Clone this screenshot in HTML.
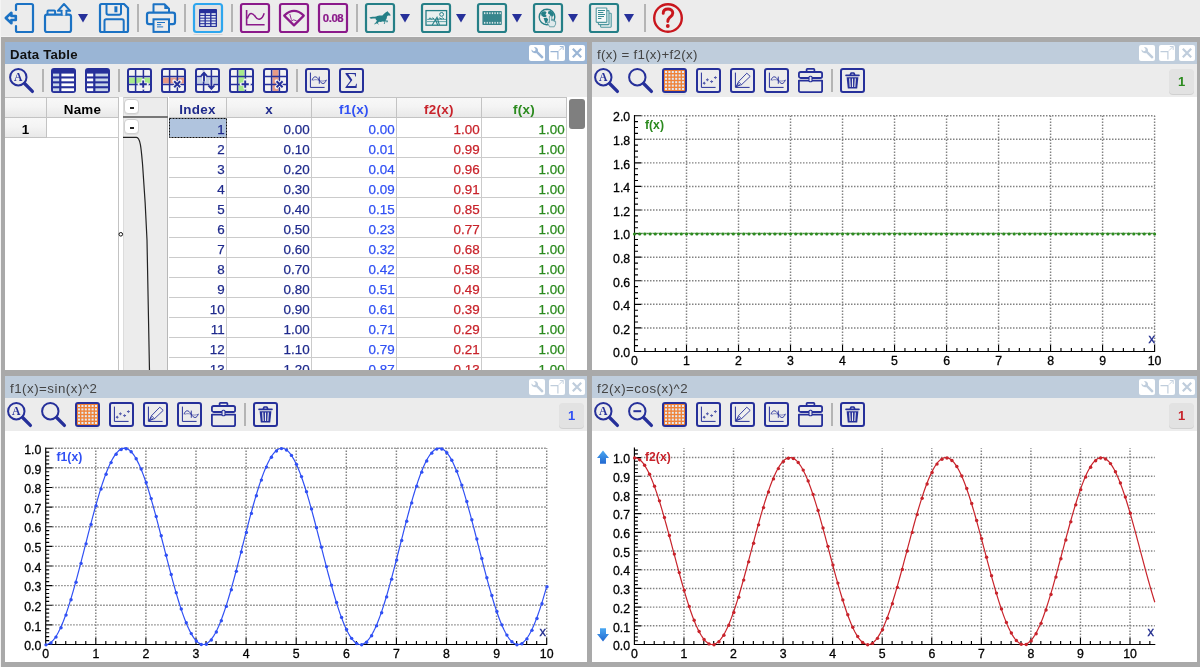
<!DOCTYPE html>
<html><head><meta charset="utf-8"><title>Data Table</title>
<style>
html,body{margin:0;padding:0}
body{width:1200px;height:667px;overflow:hidden;position:relative;background:#a9a9a9;font-family:"Liberation Sans",sans-serif;font-size:13px;color:#000}
div{position:absolute;box-sizing:border-box}
svg{position:absolute;left:0;top:0;overflow:visible}
svg text{font-family:"Liberation Sans",sans-serif}
.top{left:0;top:0;width:1200px;height:37px;background:#ececec}
.edge{left:0;top:0;width:1px;height:667px;background:#f4f4f4}
.edge2{left:0;top:36px;width:1200px;height:1px;background:#f3f3f3}
.title{height:22px;line-height:26px;overflow:hidden;padding-left:5px;font-size:13.3px;letter-spacing:0.3px;color:#444;white-space:nowrap}
.title.act{background:#9ab5d5;color:#111;font-weight:bold;font-size:13.2px;letter-spacing:0.2px}
.title.in{background:#bfcddc}
.tbar{height:33px;background:#ececec}
.cont{background:#fff;overflow:hidden}
.tb{width:16px;height:16px;top:3px;background:#fff;border-radius:2px}
.badge{width:25px;height:25px;top:5px;background:#e2e2e2;border-radius:4px;box-shadow:0 1px 0 #d0d0d0;font-weight:bold;font-size:13px;line-height:25px;text-align:center}
.hc{height:21px;top:0;background:linear-gradient(#f8f8f8,#f4f4f4 45%,#e8e8e8);border-right:1px solid #c3c3c3;border-bottom:1px solid #c3c3c3;border-top:1px solid #c3c3c3;font-weight:bold;text-align:center;line-height:24px;font-size:13.4px;letter-spacing:0.3px;overflow:hidden}
.c{height:20px;line-height:24px;overflow:hidden;text-align:right;padding-right:1.4px;border-right:1px solid #cbcbcb;border-bottom:1px solid #cbcbcb;font-size:13.4px;white-space:nowrap;-webkit-text-stroke-width:0.25px}
.ob{width:15px;height:15px;background:#fff;border:1px solid #cfcfcf;border-radius:4px;box-shadow:0 1px 0 #ddd}
.ob i{position:absolute;left:4.5px;top:7.4px;width:4.2px;height:1.5px;background:#222}
#root{left:0;top:0;width:1200px;height:667px;will-change:transform;overflow:hidden}
</style></head><body><div id="root">

<div class="top"></div><div class="edge2"></div><div class="edge"></div>
<svg width="1200" height="40" viewBox="0 0 1200 40">
<path d="M16,10 V5.5 Q16,4 17.5,4 H31.5 Q33,4 33,5.5 V30.5 Q33,32 31.5,32 H17.5 Q16,32 16,30.5 V26" fill="none" stroke="#1b72c4" stroke-width="2.2" stroke-linecap="round"/><path d="M5.8,18 L11.4,12.8 V16 H15.8 V20 H11.4 V23.2 Z" fill="#ececec" stroke="#1b72c4" stroke-width="2.6" stroke-linejoin="round"/><path d="M47.5,14 V11.5 Q47.5,10.6 48.4,10.6 H54.2 Q55.1,10.6 55.1,11.5 V14" fill="none" stroke="#1b72c4" stroke-width="2"/><rect x="45" y="14.6" width="26" height="17.4" rx="2" fill="none" stroke="#1b72c4" stroke-width="2.2"/><path d="M64,4 L70.2,10.8 H66.3 V14.4 H61.7 V10.8 H57.8 Z" fill="#ececec" stroke="#1b72c4" stroke-width="2" stroke-linejoin="round"/><rect x="62.7" y="11" width="2.6" height="4.6" fill="#ececec"/><path d="M78,14 h10 l-5,8.5z" fill="#26309a"/><path d="M101.5,4 H124 L128,8 V30.5 Q128,32 126.5,32 H101.5 Q100,32 100,30.5 V5.5 Q100,4 101.5,4 Z" fill="none" stroke="#1b72c4" stroke-width="2.2" stroke-linejoin="round"/><path d="M106.5,4.5 V13 Q106.5,14.8 108.3,14.8 H119.2 Q121,14.8 121,13 V4.5" fill="none" stroke="#1b72c4" stroke-width="2"/><rect x="114.4" y="6.3" width="3" height="6" fill="#1b72c4"/><path d="M104.5,31.5 V21 Q104.5,19.3 106.2,19.3 H122 Q123.7,19.3 123.7,21 V31.5" fill="none" stroke="#1b72c4" stroke-width="2"/><rect x="137" y="4" width="2" height="28" fill="#b4b4b4"/><path d="M153.5,12 V4.2 H164.5 L169,8.8 V12" fill="none" stroke="#1b72c4" stroke-width="2" stroke-linejoin="round"/><path d="M164.3,4.6 V9 H168.6 Z" fill="#1b72c4"/><rect x="147" y="12.6" width="28" height="11.6" rx="2.2" fill="none" stroke="#1b72c4" stroke-width="2.2"/><rect x="153.5" y="19.3" width="15.5" height="12.6" fill="#ececec" stroke="#1b72c4" stroke-width="2"/><path d="M157,22.5 h8 M157,24.7 h4.2 M157,26.9 h6.2" stroke="#1b72c4" stroke-width="1"/><rect x="184" y="4" width="2" height="28" fill="#b4b4b4"/><rect x="193.5" y="34" width="29" height="1" fill="#d6d6d6"/><rect x="194" y="4" width="28" height="28" rx="2.5" fill="#e2e2e2" stroke="#2ea6ee" stroke-width="2.2"/><rect x="199" y="9" width="18" height="18" rx="0.8" fill="#26309a"/><rect x="200.3" y="13.2" width="4.2" height="1.7" fill="#dfe6f2"/><rect x="205.9" y="13.2" width="4.2" height="1.7" fill="#dfe6f2"/><rect x="211.5" y="13.2" width="4.2" height="1.7" fill="#dfe6f2"/><rect x="200.3" y="15.95" width="4.2" height="1.7" fill="#dfe6f2"/><rect x="205.9" y="15.95" width="4.2" height="1.7" fill="#dfe6f2"/><rect x="211.5" y="15.95" width="4.2" height="1.7" fill="#dfe6f2"/><rect x="200.3" y="18.7" width="4.2" height="1.7" fill="#dfe6f2"/><rect x="205.9" y="18.7" width="4.2" height="1.7" fill="#dfe6f2"/><rect x="211.5" y="18.7" width="4.2" height="1.7" fill="#dfe6f2"/><rect x="200.3" y="21.45" width="4.2" height="1.7" fill="#dfe6f2"/><rect x="205.9" y="21.45" width="4.2" height="1.7" fill="#dfe6f2"/><rect x="211.5" y="21.45" width="4.2" height="1.7" fill="#dfe6f2"/><rect x="200.3" y="24.2" width="4.2" height="1.7" fill="#dfe6f2"/><rect x="205.9" y="24.2" width="4.2" height="1.7" fill="#dfe6f2"/><rect x="211.5" y="24.2" width="4.2" height="1.7" fill="#dfe6f2"/><rect x="231" y="4" width="2" height="28" fill="#b4b4b4"/><rect x="241" y="4" width="28" height="28" rx="2" fill="none" stroke="#8b1a8a" stroke-width="2.2"/><path d="M246.6,10 V24.8 H264.6" fill="none" stroke="#8b1a8a" stroke-width="1.6"/><path d="M247.4,18.6 C249.5,11 253,13 255.5,16.8 C258,20.8 262,20 264.2,13.2" fill="none" stroke="#8b1a8a" stroke-width="1.5"/><rect x="280" y="4" width="28" height="28" rx="2" fill="none" stroke="#8b1a8a" stroke-width="2.2"/><path d="M294,25.4 L284.2,15.6 Q294,6.2 303.8,15.6 Z" fill="none" stroke="#8b1a8a" stroke-width="2.2" stroke-linejoin="round"/><path d="M289.8,14 L291.4,19.8 M290.5,21.4 Q293.6,18.6 296.6,20.8" fill="none" stroke="#8b1a8a" stroke-width="0.9"/><rect x="319" y="4" width="28" height="28" rx="2" fill="none" stroke="#8b1a8a" stroke-width="2.2"/><text x="333" y="22" text-anchor="middle" font-size="11.4" font-weight="bold" letter-spacing="-0.45" fill="#8b1a8a" stroke="#8b1a8a" stroke-width="0.2">0.08</text><rect x="356" y="4" width="2" height="28" fill="#b4b4b4"/><rect x="366" y="4" width="28" height="28" rx="2" fill="none" stroke="#257f87" stroke-width="2.2"/><path d="M369.4,17.6 C371.5,16.2 374,16.8 376.2,16.4 C378,15.4 380.5,15.6 382.4,15.6 C383.6,14.4 385,12.4 386.8,11.8 L387.4,11 L388,12 C389.2,12.8 390.2,14.2 390.8,15.2 L389.8,15.8 C388.6,15.2 387.6,15.4 387,16.4 C386.8,18 386.6,19.4 385.4,20.2 C386.6,20.6 387.6,20 388,21 L387.2,22.6 L386.4,22.2 L386.8,21.4 C385.6,21.6 384.4,21.6 383.2,21.2 C382,21.8 380.4,22 379,21.8 C378.2,22.8 377,23.6 375.6,23.8 L374.8,24.6 L374.2,24 L375.2,23 C375.8,22.4 376.6,21.8 377,20.8 C376.2,20.4 375.6,19.6 375.6,18.6 C373.8,18.2 372,19 370.2,18.6 Z" fill="#257f87"/><path d="M377.4,21 C376.8,22.2 377.2,23.6 378.4,24.2 M383.6,21 C384.8,22 385,23 384,24" fill="none" stroke="#257f87" stroke-width="1"/><path d="M400,14 h10 l-5,8.5z" fill="#26309a"/><rect x="422" y="4" width="28" height="28" rx="2" fill="none" stroke="#257f87" stroke-width="2.2"/><rect x="426" y="10.6" width="20.6" height="14.6" fill="#e9f0f0" stroke="#257f87" stroke-width="1.3"/><circle cx="441.6" cy="14.4" r="1.9" fill="none" stroke="#257f87" stroke-width="1"/><path d="M427,19.4 h20 M427,21.6 h20" stroke="#257f87" stroke-width="0.9" opacity="0.75"/><path d="M428.6,19 q1.4,-2.2 2.8,0 q1.4,-2.2 2.8,0 M438.4,19 q1.4,-2.2 2.8,0 q1.4,-2.2 2.8,0" fill="none" stroke="#257f87" stroke-width="1"/><path d="M432.2,25 L437,17.2 L439.4,25 M435.6,19.6 L437.6,25" fill="none" stroke="#257f87" stroke-width="1.1"/><path d="M456,14 h10 l-5,8.5z" fill="#26309a"/><rect x="478" y="4" width="28" height="28" rx="2" fill="none" stroke="#257f87" stroke-width="2.2"/><rect x="482.4" y="11" width="19.4" height="14" rx="0.8" fill="#37858c"/><rect x="484" y="12.3" width="1.3" height="1.8" fill="#d8e6e8"/><rect x="484" y="21.9" width="1.3" height="1.8" fill="#d8e6e8"/><rect x="486.6" y="12.3" width="1.3" height="1.8" fill="#d8e6e8"/><rect x="486.6" y="21.9" width="1.3" height="1.8" fill="#d8e6e8"/><rect x="489.2" y="12.3" width="1.3" height="1.8" fill="#d8e6e8"/><rect x="489.2" y="21.9" width="1.3" height="1.8" fill="#d8e6e8"/><rect x="491.8" y="12.3" width="1.3" height="1.8" fill="#d8e6e8"/><rect x="491.8" y="21.9" width="1.3" height="1.8" fill="#d8e6e8"/><rect x="494.4" y="12.3" width="1.3" height="1.8" fill="#d8e6e8"/><rect x="494.4" y="21.9" width="1.3" height="1.8" fill="#d8e6e8"/><rect x="497" y="12.3" width="1.3" height="1.8" fill="#d8e6e8"/><rect x="497" y="21.9" width="1.3" height="1.8" fill="#d8e6e8"/><rect x="499.6" y="12.3" width="1.3" height="1.8" fill="#d8e6e8"/><rect x="499.6" y="21.9" width="1.3" height="1.8" fill="#d8e6e8"/><path d="M512,14 h10 l-5,8.5z" fill="#26309a"/><rect x="534" y="4" width="28" height="28" rx="2" fill="none" stroke="#257f87" stroke-width="2.2"/><circle cx="547" cy="17" r="7.8" fill="none" stroke="#257f87" stroke-width="1.4"/><path d="M541,13.6 L542.6,11.6 L545.2,11.2 L546.6,12.6 L545.4,14.6 L546.8,16 L545.6,17 L543.4,17 L541.4,15.6 Z M543.6,18 L546.8,17.8 L548.2,19.6 L547,22.6 L545.6,23.6 L544.6,21 Z M548.2,11.6 L550.6,10.8 L553,12.4 L553.8,15 L552.4,16.8 L550.4,16.4 L549.8,14.4 L548,13.6 Z M545.4,9.6 L548,9.4 L547,10.6 Z" fill="#257f87"/><path d="M549.4,18.2 v4.4 l-1.3,-0.6 l-0.7,1 l2.2,3.8 h4.6 l1.4,-2.6 v-3 l-1.2,-0.5 v0.9 v-1.4 l-1.3,-0.3 v1.2 v-1.6 l-1.3,-0.2 v1.4 v-4.5 q-1.2,-1 -2.4,0 z" fill="#dfeaec" stroke="#5f9aa3" stroke-width="0.9" stroke-linejoin="round"/><path d="M568,14 h10 l-5,8.5z" fill="#26309a"/><rect x="590" y="4" width="28" height="28" rx="2" fill="none" stroke="#257f87" stroke-width="2.2"/><rect x="600.6" y="13.2" width="10.6" height="14" rx="0.6" fill="#e4eeee" stroke="#4f98a0" stroke-width="1.1"/><rect x="598.4" y="10.6" width="10.6" height="14" rx="0.6" fill="#e4eeee" stroke="#4f98a0" stroke-width="1.1"/><rect x="596.2" y="8" width="10.6" height="14.4" rx="0.6" fill="#f4f8f8" stroke="#4f98a0" stroke-width="1.1"/><path d="M598,10.5 h7 M598,12.5 h5.4 M598,14.5 h7 M598,16.5 h6 M598,18.5 h3.4" stroke="#257f87" stroke-width="0.9"/><path d="M624,14 h10 l-5,8.5z" fill="#26309a"/><rect x="644" y="4" width="2" height="28" fill="#b4b4b4"/><circle cx="668" cy="18" r="13.8" fill="none" stroke="#c9161d" stroke-width="2.4"/><path d="M663.2,13.4 C663.2,10.4 665.4,9 668,9 C670.8,9 672.8,10.6 672.8,13 C672.8,15.2 671.4,16 669.8,17.4 C668.4,18.6 667.8,19.4 667.8,21.6" fill="none" stroke="#c9161d" stroke-width="2.9" stroke-linecap="round"/><circle cx="667.8" cy="26" r="1.9" fill="#c9161d"/>
</svg>
<div class="title act" style="left:5px;top:42px;width:582px">Data Table</div>
<svg width="1200" height="667" viewBox="0 0 1200 667"><rect x="529" y="45" width="16" height="16" rx="2" fill="#fff"/><rect x="549" y="45" width="16" height="16" rx="2" fill="#fff"/><rect x="569" y="45" width="16" height="16" rx="2" fill="#fff"/><g transform="translate(529,45)"><path d="M2.6,4.6 L4.3,6.3 L6.2,5.9 L6.6,4 L4.9,2.3 C7.4,1.5 9.6,3.8 8.9,6.2 L14.2,11.4 C15,12.4 13.4,14 12.4,13.2 L7.2,8 C4.8,8.8 2,7 2.6,4.6 Z" fill="#9ab5d5"/></g><g transform="translate(549,45)"><path d="M1.5,6.6 H8.9 V14.6" fill="none" stroke="#9ab5d5" stroke-width="1.2"/><path d="M10,5.6 L14,1.6 M10.8,1.5 H14.2 V4.9" fill="none" stroke="#9ab5d5" stroke-width="0.9"/></g><g transform="translate(569,45)"><path d="M3.8,3.8 L12.2,12.2 M12.2,3.8 L3.8,12.2" fill="none" stroke="#9ab5d5" stroke-width="2.2"/></g></svg>
<div class="tbar" style="left:5px;top:64px;width:582px"></div>
<div class="cont" style="left:5px;top:97px;width:582px;height:273px"></div>
<div class="title in" style="left:592px;top:42px;width:605px">f(x) = f1(x)+f2(x)</div>
<svg width="1200" height="667" viewBox="0 0 1200 667"><rect x="1139" y="45" width="16" height="16" rx="2" fill="#fff"/><rect x="1159" y="45" width="16" height="16" rx="2" fill="#fff"/><rect x="1179" y="45" width="16" height="16" rx="2" fill="#fff"/><g transform="translate(1139,45)"><path d="M2.6,4.6 L4.3,6.3 L6.2,5.9 L6.6,4 L4.9,2.3 C7.4,1.5 9.6,3.8 8.9,6.2 L14.2,11.4 C15,12.4 13.4,14 12.4,13.2 L7.2,8 C4.8,8.8 2,7 2.6,4.6 Z" fill="#bfcddc"/></g><g transform="translate(1159,45)"><path d="M1.5,6.6 H8.9 V14.6" fill="none" stroke="#bfcddc" stroke-width="1.2"/><path d="M10,5.6 L14,1.6 M10.8,1.5 H14.2 V4.9" fill="none" stroke="#bfcddc" stroke-width="0.9"/></g><g transform="translate(1179,45)"><path d="M3.8,3.8 L12.2,12.2 M12.2,3.8 L3.8,12.2" fill="none" stroke="#bfcddc" stroke-width="2.2"/></g></svg>
<div class="tbar" style="left:592px;top:64px;width:605px"></div>
<div class="cont" style="left:592px;top:97px;width:605px;height:273px"></div>
<div class="title in" style="left:5px;top:376px;width:582px;letter-spacing:0.5px">f1(x)=sin(x)^2</div>
<svg width="1200" height="667" viewBox="0 0 1200 667"><rect x="529" y="379" width="16" height="16" rx="2" fill="#fff"/><rect x="549" y="379" width="16" height="16" rx="2" fill="#fff"/><rect x="569" y="379" width="16" height="16" rx="2" fill="#fff"/><g transform="translate(529,379)"><path d="M2.6,4.6 L4.3,6.3 L6.2,5.9 L6.6,4 L4.9,2.3 C7.4,1.5 9.6,3.8 8.9,6.2 L14.2,11.4 C15,12.4 13.4,14 12.4,13.2 L7.2,8 C4.8,8.8 2,7 2.6,4.6 Z" fill="#bfcddc"/></g><g transform="translate(549,379)"><path d="M1.5,6.6 H8.9 V14.6" fill="none" stroke="#bfcddc" stroke-width="1.2"/><path d="M10,5.6 L14,1.6 M10.8,1.5 H14.2 V4.9" fill="none" stroke="#bfcddc" stroke-width="0.9"/></g><g transform="translate(569,379)"><path d="M3.8,3.8 L12.2,12.2 M12.2,3.8 L3.8,12.2" fill="none" stroke="#bfcddc" stroke-width="2.2"/></g></svg>
<div class="tbar" style="left:5px;top:398px;width:582px"></div>
<div class="cont" style="left:5px;top:431px;width:582px;height:231px"></div>
<div class="title in" style="left:592px;top:376px;width:605px;letter-spacing:0.5px">f2(x)=cos(x)^2</div>
<svg width="1200" height="667" viewBox="0 0 1200 667"><rect x="1139" y="379" width="16" height="16" rx="2" fill="#fff"/><rect x="1159" y="379" width="16" height="16" rx="2" fill="#fff"/><rect x="1179" y="379" width="16" height="16" rx="2" fill="#fff"/><g transform="translate(1139,379)"><path d="M2.6,4.6 L4.3,6.3 L6.2,5.9 L6.6,4 L4.9,2.3 C7.4,1.5 9.6,3.8 8.9,6.2 L14.2,11.4 C15,12.4 13.4,14 12.4,13.2 L7.2,8 C4.8,8.8 2,7 2.6,4.6 Z" fill="#bfcddc"/></g><g transform="translate(1159,379)"><path d="M1.5,6.6 H8.9 V14.6" fill="none" stroke="#bfcddc" stroke-width="1.2"/><path d="M10,5.6 L14,1.6 M10.8,1.5 H14.2 V4.9" fill="none" stroke="#bfcddc" stroke-width="0.9"/></g><g transform="translate(1179,379)"><path d="M3.8,3.8 L12.2,12.2 M12.2,3.8 L3.8,12.2" fill="none" stroke="#bfcddc" stroke-width="2.2"/></g></svg>
<div class="tbar" style="left:592px;top:398px;width:605px"></div>
<div class="cont" style="left:592px;top:431px;width:605px;height:231px"></div>
<div class="badge" style="left:1169px;top:69px;color:#2b8a1e">1</div>
<div class="badge" style="left:559px;top:403px;color:#3050f4">1</div>
<div class="badge" style="left:1169px;top:403px;color:#c8232b">1</div>
<svg width="1200" height="667" viewBox="0 0 1200 667">
<g transform="translate(9,68)"><circle cx="9.3" cy="9.2" r="8.2" fill="none" stroke="#26309a" stroke-width="2"/><path d="M15.6,15.5 L23.4,23.4" stroke="#26309a" stroke-width="3.3" stroke-linecap="round"/><text x="9.3" y="13.0" text-anchor="middle" font-size="11.7" font-weight="bold" style="font-family:'Liberation Serif',serif" fill="#26309a">A</text></g><rect x="42" y="69" width="2" height="23" fill="#b4b4b4"/><g transform="translate(51,68)"><rect x="0" y="0" width="25" height="25" rx="3" fill="#26309a"/><rect x="2" y="5.6" width="6.2" height="2.8" fill="#c9d6e8"/><rect x="10.4" y="5.6" width="12.6" height="2.8" fill="#ffffff"/><rect x="2" y="10.5" width="6.2" height="2.8" fill="#c9d6e8"/><rect x="10.4" y="10.5" width="12.6" height="2.8" fill="#ffffff"/><rect x="2" y="15.4" width="6.2" height="2.8" fill="#c9d6e8"/><rect x="10.4" y="15.4" width="12.6" height="2.8" fill="#ffffff"/><rect x="2" y="20.3" width="6.2" height="2.8" fill="#c9d6e8"/><rect x="10.4" y="20.3" width="12.6" height="2.8" fill="#ffffff"/></g><g transform="translate(85,68)"><rect x="0" y="0" width="25" height="25" rx="3" fill="#26309a"/><rect x="2" y="5.6" width="6.2" height="2.8" fill="#ffffff"/><rect x="10.4" y="5.6" width="12.6" height="2.8" fill="#c9d6e8"/><rect x="2" y="10.5" width="6.2" height="2.8" fill="#ffffff"/><rect x="10.4" y="10.5" width="12.6" height="2.8" fill="#c9d6e8"/><rect x="2" y="15.4" width="6.2" height="2.8" fill="#ffffff"/><rect x="10.4" y="15.4" width="12.6" height="2.8" fill="#c9d6e8"/><rect x="2" y="20.3" width="6.2" height="2.8" fill="#ffffff"/><rect x="10.4" y="20.3" width="12.6" height="2.8" fill="#c9d6e8"/></g><rect x="118" y="69" width="2" height="23" fill="#b4b4b4"/><g transform="translate(127,68)"><rect x="1" y="1" width="23" height="23" rx="2" fill="#f3f3f3" stroke="#26309a" stroke-width="2"/><rect x="2" y="9.6" width="21" height="5.8" fill="#a8ea8a"/><path d="M8.6,1 V24 M16.4,1 V24 M1,8.6 H24 M1,16.4 H24" stroke="#26309a" stroke-width="1.5"/><path d="M12.4,16.2 h7.6 M16.2,12.4 v7.6" stroke="#f3f3f3" stroke-width="3.6" stroke-linecap="round"/><path d="M12.6,16.2 h7.2 M16.2,12.6 v7.2" stroke="#26309a" stroke-width="1.9"/></g><g transform="translate(161,68)"><rect x="1" y="1" width="23" height="23" rx="2" fill="#f3f3f3" stroke="#26309a" stroke-width="2"/><rect x="2" y="9.6" width="21" height="5.8" fill="#e79a86"/><path d="M8.6,1 V24 M16.4,1 V24 M1,8.6 H24 M1,16.4 H24" stroke="#26309a" stroke-width="1.5"/><path d="M13.2,13.2 l6,6 M19.2,13.2 l-6,6" stroke="#f3f3f3" stroke-width="3.8" stroke-linecap="round"/><path d="M13.2,13.2 l6,6 M19.2,13.2 l-6,6" stroke="#26309a" stroke-width="2"/></g><g transform="translate(195,68)"><rect x="1" y="1" width="23" height="23" rx="2" fill="#f3f3f3" stroke="#26309a" stroke-width="2"/><rect x="2" y="9.6" width="21" height="5.8" fill="#c3cfe0"/><path d="M8.6,1 V24 M16.4,1 V24 M1,8.6 H24 M1,16.4 H24" stroke="#26309a" stroke-width="1.5"/><path d="M9,13.4 V5 M6,8 L9,4.6 L12,8" fill="none" stroke="#f3f3f3" stroke-width="3.8"/><path d="M16.4,12 V20.6 M13.4,17.6 L16.4,21 L19.4,17.6" fill="none" stroke="#f3f3f3" stroke-width="3.8"/><path d="M9,13.4 V5.4 M6,8.2 L9,4.8 L12,8.2" fill="none" stroke="#26309a" stroke-width="1.9"/><path d="M16.4,12 V20.4 M13.4,17.4 L16.4,20.8 L19.4,17.4" fill="none" stroke="#26309a" stroke-width="1.9"/></g><g transform="translate(229,68)"><rect x="1" y="1" width="23" height="23" rx="2" fill="#f3f3f3" stroke="#26309a" stroke-width="2"/><rect x="9.6" y="2" width="5.8" height="21" fill="#a8ea8a"/><path d="M8.6,1 V24 M16.4,1 V24 M1,8.6 H24 M1,16.4 H24" stroke="#26309a" stroke-width="1.5"/><path d="M12.4,16.2 h7.6 M16.2,12.4 v7.6" stroke="#f3f3f3" stroke-width="3.6" stroke-linecap="round"/><path d="M12.6,16.2 h7.2 M16.2,12.6 v7.2" stroke="#26309a" stroke-width="1.9"/></g><g transform="translate(263,68)"><rect x="1" y="1" width="23" height="23" rx="2" fill="#f3f3f3" stroke="#26309a" stroke-width="2"/><rect x="9.6" y="2" width="5.8" height="21" fill="#e79a86"/><path d="M8.6,1 V24 M16.4,1 V24 M1,8.6 H24 M1,16.4 H24" stroke="#26309a" stroke-width="1.5"/><path d="M13.6,13.2 l6,6 M19.6,13.2 l-6,6" stroke="#f3f3f3" stroke-width="3.8" stroke-linecap="round"/><path d="M13.6,13.2 l6,6 M19.6,13.2 l-6,6" stroke="#26309a" stroke-width="2"/></g><rect x="296" y="69" width="2" height="23" fill="#b4b4b4"/><g transform="translate(305,68)"><rect x="1" y="1" width="23" height="23" rx="2" fill="none" stroke="#26309a" stroke-width="2"/><path d="M5.4,4.6 V19.4 H19.6" fill="none" stroke="#26309a" stroke-width="1"/><path d="M7,12.2 C8.6,7.6 11.6,7.8 14.2,12.2 S19.6,16.8 21.4,11.8" fill="none" stroke="#26309a" stroke-width="0.95"/><path d="M7.6,12.4 C10,11.2 12.4,11.6 14.2,12.4 S18.6,13.4 21,12.4" fill="none" stroke="#26309a" stroke-width="0.55"/><path d="M14.3,8.6 V15.8" stroke="#26309a" stroke-width="0.9"/></g><g transform="translate(339,68)"><rect x="1" y="1" width="23" height="23" rx="2" fill="none" stroke="#26309a" stroke-width="2"/><text x="12.3" y="20.1" text-anchor="middle" font-size="23.2" style="font-family:'Liberation Serif',serif" fill="#26309a">Σ</text></g>
<g transform="translate(594,68)"><circle cx="9.3" cy="9.2" r="8.2" fill="none" stroke="#26309a" stroke-width="2"/><path d="M15.6,15.5 L23.4,23.4" stroke="#26309a" stroke-width="3.3" stroke-linecap="round"/><text x="9.3" y="13.0" text-anchor="middle" font-size="11.7" font-weight="bold" style="font-family:'Liberation Serif',serif" fill="#26309a">A</text></g><g transform="translate(628,68)"><circle cx="9.3" cy="9.2" r="8.2" fill="none" stroke="#26309a" stroke-width="2"/><path d="M15.6,15.5 L23.4,23.4" stroke="#26309a" stroke-width="3.3" stroke-linecap="round"/></g><g transform="translate(662,68)"><rect x="1.5" y="25.6" width="22" height="1" fill="#d9d9d9"/><rect x="1" y="1" width="23" height="23" rx="2" fill="#ef8238" stroke="#26309a" stroke-width="2"/><rect x="3" y="3" width="2.0" height="2.0" fill="#e3ebf6"/><rect x="6.4" y="3" width="2.0" height="2.0" fill="#e3ebf6"/><rect x="9.8" y="3" width="2.0" height="2.0" fill="#e3ebf6"/><rect x="13.2" y="3" width="2.0" height="2.0" fill="#e3ebf6"/><rect x="16.6" y="3" width="2.0" height="2.0" fill="#e3ebf6"/><rect x="20" y="3" width="2.0" height="2.0" fill="#e3ebf6"/><rect x="3" y="6.4" width="2.0" height="2.0" fill="#e3ebf6"/><rect x="6.4" y="6.4" width="2.0" height="2.0" fill="#e3ebf6"/><rect x="9.8" y="6.4" width="2.0" height="2.0" fill="#e3ebf6"/><rect x="13.2" y="6.4" width="2.0" height="2.0" fill="#e3ebf6"/><rect x="16.6" y="6.4" width="2.0" height="2.0" fill="#e3ebf6"/><rect x="20" y="6.4" width="2.0" height="2.0" fill="#e3ebf6"/><rect x="3" y="9.8" width="2.0" height="2.0" fill="#e3ebf6"/><rect x="6.4" y="9.8" width="2.0" height="2.0" fill="#e3ebf6"/><rect x="9.8" y="9.8" width="2.0" height="2.0" fill="#e3ebf6"/><rect x="13.2" y="9.8" width="2.0" height="2.0" fill="#e3ebf6"/><rect x="16.6" y="9.8" width="2.0" height="2.0" fill="#e3ebf6"/><rect x="20" y="9.8" width="2.0" height="2.0" fill="#e3ebf6"/><rect x="3" y="13.2" width="2.0" height="2.0" fill="#e3ebf6"/><rect x="6.4" y="13.2" width="2.0" height="2.0" fill="#e3ebf6"/><rect x="9.8" y="13.2" width="2.0" height="2.0" fill="#e3ebf6"/><rect x="13.2" y="13.2" width="2.0" height="2.0" fill="#e3ebf6"/><rect x="16.6" y="13.2" width="2.0" height="2.0" fill="#e3ebf6"/><rect x="20" y="13.2" width="2.0" height="2.0" fill="#e3ebf6"/><rect x="3" y="16.6" width="2.0" height="2.0" fill="#e3ebf6"/><rect x="6.4" y="16.6" width="2.0" height="2.0" fill="#e3ebf6"/><rect x="9.8" y="16.6" width="2.0" height="2.0" fill="#e3ebf6"/><rect x="13.2" y="16.6" width="2.0" height="2.0" fill="#e3ebf6"/><rect x="16.6" y="16.6" width="2.0" height="2.0" fill="#e3ebf6"/><rect x="20" y="16.6" width="2.0" height="2.0" fill="#e3ebf6"/><rect x="3" y="20" width="2.0" height="2.0" fill="#e3ebf6"/><rect x="6.4" y="20" width="2.0" height="2.0" fill="#e3ebf6"/><rect x="9.8" y="20" width="2.0" height="2.0" fill="#e3ebf6"/><rect x="13.2" y="20" width="2.0" height="2.0" fill="#e3ebf6"/><rect x="16.6" y="20" width="2.0" height="2.0" fill="#e3ebf6"/><rect x="20" y="20" width="2.0" height="2.0" fill="#e3ebf6"/></g><g transform="translate(696,68)"><rect x="1" y="1" width="23" height="23" rx="2" fill="none" stroke="#26309a" stroke-width="2"/><path d="M5.4,4.6 V19.4 H19.6" fill="none" stroke="#26309a" stroke-width="1"/><path d="M8.2,13.5 l0.595,1.105 l1.105,0.595 l-1.105,0.595 l-0.595,1.105 z" fill="#26309a"/><path d="M8.2,13.5 l-0.595,1.105 l-1.105,0.595 l1.105,0.595 l0.595,1.105 z" fill="#26309a"/><path d="M11.4,10.1 l0.595,1.105 l1.105,0.595 l-1.105,0.595 l-0.595,1.105 z" fill="#26309a"/><path d="M11.4,10.1 l-0.595,1.105 l-1.105,0.595 l1.105,0.595 l0.595,1.105 z" fill="#26309a"/><path d="M15.6,11.9 l0.595,1.105 l1.105,0.595 l-1.105,0.595 l-0.595,1.105 z" fill="#26309a"/><path d="M15.6,11.9 l-0.595,1.105 l-1.105,0.595 l1.105,0.595 l0.595,1.105 z" fill="#26309a"/><path d="M19.4,7.9 l0.595,1.105 l1.105,0.595 l-1.105,0.595 l-0.595,1.105 z" fill="#26309a"/><path d="M19.4,7.9 l-0.595,1.105 l-1.105,0.595 l1.105,0.595 l0.595,1.105 z" fill="#26309a"/></g><g transform="translate(730,68)"><rect x="1" y="1" width="23" height="23" rx="2" fill="none" stroke="#26309a" stroke-width="2"/><path d="M5.4,4.6 V19.4 H19.6" fill="none" stroke="#26309a" stroke-width="1"/><path d="M6.2,18.6 L8.6,13.6 L16.8,5.2 L20.2,8.4 L11.6,16.6 Z" fill="#f0f0f0" stroke="#26309a" stroke-width="0.9" stroke-linejoin="round"/><path d="M8.6,13.6 L9.6,14.8 L10.4,15.4 L11.6,16.6 M6.2,18.6 L8,15.4 L9.6,17 Z" fill="none" stroke="#26309a" stroke-width="0.8"/></g><g transform="translate(764,68)"><rect x="1" y="1" width="23" height="23" rx="2" fill="none" stroke="#26309a" stroke-width="2"/><path d="M5.4,4.6 V19.4 H19.6" fill="none" stroke="#26309a" stroke-width="1"/><path d="M7,12.2 C8.6,7.6 11.6,7.8 14.2,12.2 S19.6,16.8 21.4,11.8" fill="none" stroke="#26309a" stroke-width="0.95"/><path d="M7.6,12.4 C10,11.2 12.4,11.6 14.2,12.4 S18.6,13.4 21,12.4" fill="none" stroke="#26309a" stroke-width="0.55"/><path d="M14.3,8.6 V15.8" stroke="#26309a" stroke-width="0.9"/></g><g transform="translate(798,68)"><path d="M8.6,4 V1.6 Q8.6,0.8 9.4,0.8 H15.6 Q16.4,0.8 16.4,1.6 V4" fill="none" stroke="#26309a" stroke-width="1.7"/><rect x="0.9" y="4" width="23.2" height="6" rx="1.8" fill="none" stroke="#26309a" stroke-width="1.8"/><path d="M0.9,12.6 H24.1 V22.4 Q24.1,24.1 22.4,24.1 H2.6 Q0.9,24.1 0.9,22.4 Z" fill="none" stroke="#26309a" stroke-width="1.8" stroke-linejoin="round"/><rect x="11" y="8.2" width="3" height="5.6" rx="1" fill="#e6e6ee" stroke="#26309a" stroke-width="1.1"/></g><rect x="831" y="69" width="2" height="23" fill="#b4b4b4"/><g transform="translate(840,68)"><rect x="1" y="1" width="23" height="23" rx="2" fill="none" stroke="#26309a" stroke-width="2"/><path d="M6,7.4 H19 M10.4,6.4 L11.2,5 H13.8 L14.6,6.4" fill="none" stroke="#26309a" stroke-width="1.6" stroke-linecap="round" stroke-linejoin="round"/><path d="M6.6,9.2 H18.4 L17.2,20.4 H7.8 Z" fill="#26309a"/><path d="M9.7,10.4 L10.2,19 M12.5,10.4 V19 M15.3,10.4 L14.8,19" stroke="#ececec" stroke-width="1.1"/></g>
<g transform="translate(7,402)"><circle cx="9.3" cy="9.2" r="8.2" fill="none" stroke="#26309a" stroke-width="2"/><path d="M15.6,15.5 L23.4,23.4" stroke="#26309a" stroke-width="3.3" stroke-linecap="round"/><text x="9.3" y="13.0" text-anchor="middle" font-size="11.7" font-weight="bold" style="font-family:'Liberation Serif',serif" fill="#26309a">A</text></g><g transform="translate(41,402)"><circle cx="9.3" cy="9.2" r="8.2" fill="none" stroke="#26309a" stroke-width="2"/><path d="M15.6,15.5 L23.4,23.4" stroke="#26309a" stroke-width="3.3" stroke-linecap="round"/></g><g transform="translate(75,402)"><rect x="1.5" y="25.6" width="22" height="1" fill="#d9d9d9"/><rect x="1" y="1" width="23" height="23" rx="2" fill="#ef8238" stroke="#26309a" stroke-width="2"/><rect x="3" y="3" width="2.0" height="2.0" fill="#e3ebf6"/><rect x="6.4" y="3" width="2.0" height="2.0" fill="#e3ebf6"/><rect x="9.8" y="3" width="2.0" height="2.0" fill="#e3ebf6"/><rect x="13.2" y="3" width="2.0" height="2.0" fill="#e3ebf6"/><rect x="16.6" y="3" width="2.0" height="2.0" fill="#e3ebf6"/><rect x="20" y="3" width="2.0" height="2.0" fill="#e3ebf6"/><rect x="3" y="6.4" width="2.0" height="2.0" fill="#e3ebf6"/><rect x="6.4" y="6.4" width="2.0" height="2.0" fill="#e3ebf6"/><rect x="9.8" y="6.4" width="2.0" height="2.0" fill="#e3ebf6"/><rect x="13.2" y="6.4" width="2.0" height="2.0" fill="#e3ebf6"/><rect x="16.6" y="6.4" width="2.0" height="2.0" fill="#e3ebf6"/><rect x="20" y="6.4" width="2.0" height="2.0" fill="#e3ebf6"/><rect x="3" y="9.8" width="2.0" height="2.0" fill="#e3ebf6"/><rect x="6.4" y="9.8" width="2.0" height="2.0" fill="#e3ebf6"/><rect x="9.8" y="9.8" width="2.0" height="2.0" fill="#e3ebf6"/><rect x="13.2" y="9.8" width="2.0" height="2.0" fill="#e3ebf6"/><rect x="16.6" y="9.8" width="2.0" height="2.0" fill="#e3ebf6"/><rect x="20" y="9.8" width="2.0" height="2.0" fill="#e3ebf6"/><rect x="3" y="13.2" width="2.0" height="2.0" fill="#e3ebf6"/><rect x="6.4" y="13.2" width="2.0" height="2.0" fill="#e3ebf6"/><rect x="9.8" y="13.2" width="2.0" height="2.0" fill="#e3ebf6"/><rect x="13.2" y="13.2" width="2.0" height="2.0" fill="#e3ebf6"/><rect x="16.6" y="13.2" width="2.0" height="2.0" fill="#e3ebf6"/><rect x="20" y="13.2" width="2.0" height="2.0" fill="#e3ebf6"/><rect x="3" y="16.6" width="2.0" height="2.0" fill="#e3ebf6"/><rect x="6.4" y="16.6" width="2.0" height="2.0" fill="#e3ebf6"/><rect x="9.8" y="16.6" width="2.0" height="2.0" fill="#e3ebf6"/><rect x="13.2" y="16.6" width="2.0" height="2.0" fill="#e3ebf6"/><rect x="16.6" y="16.6" width="2.0" height="2.0" fill="#e3ebf6"/><rect x="20" y="16.6" width="2.0" height="2.0" fill="#e3ebf6"/><rect x="3" y="20" width="2.0" height="2.0" fill="#e3ebf6"/><rect x="6.4" y="20" width="2.0" height="2.0" fill="#e3ebf6"/><rect x="9.8" y="20" width="2.0" height="2.0" fill="#e3ebf6"/><rect x="13.2" y="20" width="2.0" height="2.0" fill="#e3ebf6"/><rect x="16.6" y="20" width="2.0" height="2.0" fill="#e3ebf6"/><rect x="20" y="20" width="2.0" height="2.0" fill="#e3ebf6"/></g><g transform="translate(109,402)"><rect x="1" y="1" width="23" height="23" rx="2" fill="none" stroke="#26309a" stroke-width="2"/><path d="M5.4,4.6 V19.4 H19.6" fill="none" stroke="#26309a" stroke-width="1"/><path d="M8.2,13.5 l0.595,1.105 l1.105,0.595 l-1.105,0.595 l-0.595,1.105 z" fill="#26309a"/><path d="M8.2,13.5 l-0.595,1.105 l-1.105,0.595 l1.105,0.595 l0.595,1.105 z" fill="#26309a"/><path d="M11.4,10.1 l0.595,1.105 l1.105,0.595 l-1.105,0.595 l-0.595,1.105 z" fill="#26309a"/><path d="M11.4,10.1 l-0.595,1.105 l-1.105,0.595 l1.105,0.595 l0.595,1.105 z" fill="#26309a"/><path d="M15.6,11.9 l0.595,1.105 l1.105,0.595 l-1.105,0.595 l-0.595,1.105 z" fill="#26309a"/><path d="M15.6,11.9 l-0.595,1.105 l-1.105,0.595 l1.105,0.595 l0.595,1.105 z" fill="#26309a"/><path d="M19.4,7.9 l0.595,1.105 l1.105,0.595 l-1.105,0.595 l-0.595,1.105 z" fill="#26309a"/><path d="M19.4,7.9 l-0.595,1.105 l-1.105,0.595 l1.105,0.595 l0.595,1.105 z" fill="#26309a"/></g><g transform="translate(143,402)"><rect x="1" y="1" width="23" height="23" rx="2" fill="none" stroke="#26309a" stroke-width="2"/><path d="M5.4,4.6 V19.4 H19.6" fill="none" stroke="#26309a" stroke-width="1"/><path d="M6.2,18.6 L8.6,13.6 L16.8,5.2 L20.2,8.4 L11.6,16.6 Z" fill="#f0f0f0" stroke="#26309a" stroke-width="0.9" stroke-linejoin="round"/><path d="M8.6,13.6 L9.6,14.8 L10.4,15.4 L11.6,16.6 M6.2,18.6 L8,15.4 L9.6,17 Z" fill="none" stroke="#26309a" stroke-width="0.8"/></g><g transform="translate(177,402)"><rect x="1" y="1" width="23" height="23" rx="2" fill="none" stroke="#26309a" stroke-width="2"/><path d="M5.4,4.6 V19.4 H19.6" fill="none" stroke="#26309a" stroke-width="1"/><path d="M7,12.2 C8.6,7.6 11.6,7.8 14.2,12.2 S19.6,16.8 21.4,11.8" fill="none" stroke="#26309a" stroke-width="0.95"/><path d="M7.6,12.4 C10,11.2 12.4,11.6 14.2,12.4 S18.6,13.4 21,12.4" fill="none" stroke="#26309a" stroke-width="0.55"/><path d="M14.3,8.6 V15.8" stroke="#26309a" stroke-width="0.9"/></g><g transform="translate(211,402)"><path d="M8.6,4 V1.6 Q8.6,0.8 9.4,0.8 H15.6 Q16.4,0.8 16.4,1.6 V4" fill="none" stroke="#26309a" stroke-width="1.7"/><rect x="0.9" y="4" width="23.2" height="6" rx="1.8" fill="none" stroke="#26309a" stroke-width="1.8"/><path d="M0.9,12.6 H24.1 V22.4 Q24.1,24.1 22.4,24.1 H2.6 Q0.9,24.1 0.9,22.4 Z" fill="none" stroke="#26309a" stroke-width="1.8" stroke-linejoin="round"/><rect x="11" y="8.2" width="3" height="5.6" rx="1" fill="#e6e6ee" stroke="#26309a" stroke-width="1.1"/></g><rect x="244" y="403" width="2" height="23" fill="#b4b4b4"/><g transform="translate(253,402)"><rect x="1" y="1" width="23" height="23" rx="2" fill="none" stroke="#26309a" stroke-width="2"/><path d="M6,7.4 H19 M10.4,6.4 L11.2,5 H13.8 L14.6,6.4" fill="none" stroke="#26309a" stroke-width="1.6" stroke-linecap="round" stroke-linejoin="round"/><path d="M6.6,9.2 H18.4 L17.2,20.4 H7.8 Z" fill="#26309a"/><path d="M9.7,10.4 L10.2,19 M12.5,10.4 V19 M15.3,10.4 L14.8,19" stroke="#ececec" stroke-width="1.1"/></g>
<g transform="translate(594,402)"><circle cx="9.3" cy="9.2" r="8.2" fill="none" stroke="#26309a" stroke-width="2"/><path d="M15.6,15.5 L23.4,23.4" stroke="#26309a" stroke-width="3.3" stroke-linecap="round"/><text x="9.3" y="13.0" text-anchor="middle" font-size="11.7" font-weight="bold" style="font-family:'Liberation Serif',serif" fill="#26309a">A</text></g><g transform="translate(628,402)"><circle cx="9.3" cy="9.2" r="8.2" fill="none" stroke="#26309a" stroke-width="2"/><path d="M15.6,15.5 L23.4,23.4" stroke="#26309a" stroke-width="3.3" stroke-linecap="round"/><path d="M5.4,9.2 H13.2" stroke="#26309a" stroke-width="2"/></g><g transform="translate(662,402)"><rect x="1.5" y="25.6" width="22" height="1" fill="#d9d9d9"/><rect x="1" y="1" width="23" height="23" rx="2" fill="#ef8238" stroke="#26309a" stroke-width="2"/><rect x="3" y="3" width="2.0" height="2.0" fill="#e3ebf6"/><rect x="6.4" y="3" width="2.0" height="2.0" fill="#e3ebf6"/><rect x="9.8" y="3" width="2.0" height="2.0" fill="#e3ebf6"/><rect x="13.2" y="3" width="2.0" height="2.0" fill="#e3ebf6"/><rect x="16.6" y="3" width="2.0" height="2.0" fill="#e3ebf6"/><rect x="20" y="3" width="2.0" height="2.0" fill="#e3ebf6"/><rect x="3" y="6.4" width="2.0" height="2.0" fill="#e3ebf6"/><rect x="6.4" y="6.4" width="2.0" height="2.0" fill="#e3ebf6"/><rect x="9.8" y="6.4" width="2.0" height="2.0" fill="#e3ebf6"/><rect x="13.2" y="6.4" width="2.0" height="2.0" fill="#e3ebf6"/><rect x="16.6" y="6.4" width="2.0" height="2.0" fill="#e3ebf6"/><rect x="20" y="6.4" width="2.0" height="2.0" fill="#e3ebf6"/><rect x="3" y="9.8" width="2.0" height="2.0" fill="#e3ebf6"/><rect x="6.4" y="9.8" width="2.0" height="2.0" fill="#e3ebf6"/><rect x="9.8" y="9.8" width="2.0" height="2.0" fill="#e3ebf6"/><rect x="13.2" y="9.8" width="2.0" height="2.0" fill="#e3ebf6"/><rect x="16.6" y="9.8" width="2.0" height="2.0" fill="#e3ebf6"/><rect x="20" y="9.8" width="2.0" height="2.0" fill="#e3ebf6"/><rect x="3" y="13.2" width="2.0" height="2.0" fill="#e3ebf6"/><rect x="6.4" y="13.2" width="2.0" height="2.0" fill="#e3ebf6"/><rect x="9.8" y="13.2" width="2.0" height="2.0" fill="#e3ebf6"/><rect x="13.2" y="13.2" width="2.0" height="2.0" fill="#e3ebf6"/><rect x="16.6" y="13.2" width="2.0" height="2.0" fill="#e3ebf6"/><rect x="20" y="13.2" width="2.0" height="2.0" fill="#e3ebf6"/><rect x="3" y="16.6" width="2.0" height="2.0" fill="#e3ebf6"/><rect x="6.4" y="16.6" width="2.0" height="2.0" fill="#e3ebf6"/><rect x="9.8" y="16.6" width="2.0" height="2.0" fill="#e3ebf6"/><rect x="13.2" y="16.6" width="2.0" height="2.0" fill="#e3ebf6"/><rect x="16.6" y="16.6" width="2.0" height="2.0" fill="#e3ebf6"/><rect x="20" y="16.6" width="2.0" height="2.0" fill="#e3ebf6"/><rect x="3" y="20" width="2.0" height="2.0" fill="#e3ebf6"/><rect x="6.4" y="20" width="2.0" height="2.0" fill="#e3ebf6"/><rect x="9.8" y="20" width="2.0" height="2.0" fill="#e3ebf6"/><rect x="13.2" y="20" width="2.0" height="2.0" fill="#e3ebf6"/><rect x="16.6" y="20" width="2.0" height="2.0" fill="#e3ebf6"/><rect x="20" y="20" width="2.0" height="2.0" fill="#e3ebf6"/></g><g transform="translate(696,402)"><rect x="1" y="1" width="23" height="23" rx="2" fill="none" stroke="#26309a" stroke-width="2"/><path d="M5.4,4.6 V19.4 H19.6" fill="none" stroke="#26309a" stroke-width="1"/><path d="M8.2,13.5 l0.595,1.105 l1.105,0.595 l-1.105,0.595 l-0.595,1.105 z" fill="#26309a"/><path d="M8.2,13.5 l-0.595,1.105 l-1.105,0.595 l1.105,0.595 l0.595,1.105 z" fill="#26309a"/><path d="M11.4,10.1 l0.595,1.105 l1.105,0.595 l-1.105,0.595 l-0.595,1.105 z" fill="#26309a"/><path d="M11.4,10.1 l-0.595,1.105 l-1.105,0.595 l1.105,0.595 l0.595,1.105 z" fill="#26309a"/><path d="M15.6,11.9 l0.595,1.105 l1.105,0.595 l-1.105,0.595 l-0.595,1.105 z" fill="#26309a"/><path d="M15.6,11.9 l-0.595,1.105 l-1.105,0.595 l1.105,0.595 l0.595,1.105 z" fill="#26309a"/><path d="M19.4,7.9 l0.595,1.105 l1.105,0.595 l-1.105,0.595 l-0.595,1.105 z" fill="#26309a"/><path d="M19.4,7.9 l-0.595,1.105 l-1.105,0.595 l1.105,0.595 l0.595,1.105 z" fill="#26309a"/></g><g transform="translate(730,402)"><rect x="1" y="1" width="23" height="23" rx="2" fill="none" stroke="#26309a" stroke-width="2"/><path d="M5.4,4.6 V19.4 H19.6" fill="none" stroke="#26309a" stroke-width="1"/><path d="M6.2,18.6 L8.6,13.6 L16.8,5.2 L20.2,8.4 L11.6,16.6 Z" fill="#f0f0f0" stroke="#26309a" stroke-width="0.9" stroke-linejoin="round"/><path d="M8.6,13.6 L9.6,14.8 L10.4,15.4 L11.6,16.6 M6.2,18.6 L8,15.4 L9.6,17 Z" fill="none" stroke="#26309a" stroke-width="0.8"/></g><g transform="translate(764,402)"><rect x="1" y="1" width="23" height="23" rx="2" fill="none" stroke="#26309a" stroke-width="2"/><path d="M5.4,4.6 V19.4 H19.6" fill="none" stroke="#26309a" stroke-width="1"/><path d="M7,12.2 C8.6,7.6 11.6,7.8 14.2,12.2 S19.6,16.8 21.4,11.8" fill="none" stroke="#26309a" stroke-width="0.95"/><path d="M7.6,12.4 C10,11.2 12.4,11.6 14.2,12.4 S18.6,13.4 21,12.4" fill="none" stroke="#26309a" stroke-width="0.55"/><path d="M14.3,8.6 V15.8" stroke="#26309a" stroke-width="0.9"/></g><g transform="translate(798,402)"><path d="M8.6,4 V1.6 Q8.6,0.8 9.4,0.8 H15.6 Q16.4,0.8 16.4,1.6 V4" fill="none" stroke="#26309a" stroke-width="1.7"/><rect x="0.9" y="4" width="23.2" height="6" rx="1.8" fill="none" stroke="#26309a" stroke-width="1.8"/><path d="M0.9,12.6 H24.1 V22.4 Q24.1,24.1 22.4,24.1 H2.6 Q0.9,24.1 0.9,22.4 Z" fill="none" stroke="#26309a" stroke-width="1.8" stroke-linejoin="round"/><rect x="11" y="8.2" width="3" height="5.6" rx="1" fill="#e6e6ee" stroke="#26309a" stroke-width="1.1"/></g><rect x="831" y="403" width="2" height="23" fill="#b4b4b4"/><g transform="translate(840,402)"><rect x="1" y="1" width="23" height="23" rx="2" fill="none" stroke="#26309a" stroke-width="2"/><path d="M6,7.4 H19 M10.4,6.4 L11.2,5 H13.8 L14.6,6.4" fill="none" stroke="#26309a" stroke-width="1.6" stroke-linecap="round" stroke-linejoin="round"/><path d="M6.6,9.2 H18.4 L17.2,20.4 H7.8 Z" fill="#26309a"/><path d="M9.7,10.4 L10.2,19 M12.5,10.4 V19 M15.3,10.4 L14.8,19" stroke="#ececec" stroke-width="1.1"/></g>
</svg>
<div class="cont" style="left:5px;top:97px;width:582px;height:273px;background:#fff">
<div style="left:0;top:0;width:114px;height:273px;border-right:1px solid #c3c3c3"></div>
<div class="hc" style="left:0;width:42px"></div>
<div class="hc" style="left:42px;width:72px">Name</div>
<div class="hc" style="left:0;top:21px;width:42px;height:20px;border-top:none;line-height:24px">1</div>
<div class="c" style="left:42px;top:21px;width:72px"></div>
<div style="left:118px;top:0;width:45px;height:273px;background:#ececec;border-left:1px solid #dcdcdc;border-right:1px solid #b8b8b8;border-top:1px solid #c3c3c3"></div>
<div class="ob" style="left:119px;top:2px"><i></i></div>
<div class="ob" style="left:119px;top:22px"><i></i></div>
<div style="left:118px;top:19px;width:45px;height:2px;background:#777"></div>
<svg width="582" height="273" viewBox="5 97 582 273"><path d="M123,137.3 H136.5 C140.5,137.3 141.3,150 142.6,165 C144.5,190 146,215 147,240 L149.5,371" fill="none" stroke="#222" stroke-width="1.2"/><circle cx="120.8" cy="234.3" r="1.8" fill="#fff" stroke="#111" stroke-width="1"/></svg>
<div class="hc" style="left:164px;width:58px;color:#1f2a8c">Index</div>
<div class="hc" style="left:222px;width:85px;color:#1f2a8c">x</div>
<div class="hc" style="left:307px;width:85px;color:#3050f4">f1(x)</div>
<div class="hc" style="left:392px;width:85px;color:#c8232b">f2(x)</div>
<div class="hc" style="left:477px;width:85px;color:#2b8a1e">f(x)</div>
<div class="c" style="left:164px;top:21px;width:58px;color:#1f2a8c;background:#b0c4de">1</div>
<div class="c" style="left:222px;top:21px;width:85px;color:#1f2a8c">0.00</div>
<div class="c" style="left:307px;top:21px;width:85px;color:#3050f4">0.00</div>
<div class="c" style="left:392px;top:21px;width:85px;color:#c8232b">1.00</div>
<div class="c" style="left:477px;top:21px;width:85px;color:#2b8a1e">1.00</div>
<div class="c" style="left:164px;top:41px;width:58px;color:#1f2a8c">2</div>
<div class="c" style="left:222px;top:41px;width:85px;color:#1f2a8c">0.10</div>
<div class="c" style="left:307px;top:41px;width:85px;color:#3050f4">0.01</div>
<div class="c" style="left:392px;top:41px;width:85px;color:#c8232b">0.99</div>
<div class="c" style="left:477px;top:41px;width:85px;color:#2b8a1e">1.00</div>
<div class="c" style="left:164px;top:61px;width:58px;color:#1f2a8c">3</div>
<div class="c" style="left:222px;top:61px;width:85px;color:#1f2a8c">0.20</div>
<div class="c" style="left:307px;top:61px;width:85px;color:#3050f4">0.04</div>
<div class="c" style="left:392px;top:61px;width:85px;color:#c8232b">0.96</div>
<div class="c" style="left:477px;top:61px;width:85px;color:#2b8a1e">1.00</div>
<div class="c" style="left:164px;top:81px;width:58px;color:#1f2a8c">4</div>
<div class="c" style="left:222px;top:81px;width:85px;color:#1f2a8c">0.30</div>
<div class="c" style="left:307px;top:81px;width:85px;color:#3050f4">0.09</div>
<div class="c" style="left:392px;top:81px;width:85px;color:#c8232b">0.91</div>
<div class="c" style="left:477px;top:81px;width:85px;color:#2b8a1e">1.00</div>
<div class="c" style="left:164px;top:101px;width:58px;color:#1f2a8c">5</div>
<div class="c" style="left:222px;top:101px;width:85px;color:#1f2a8c">0.40</div>
<div class="c" style="left:307px;top:101px;width:85px;color:#3050f4">0.15</div>
<div class="c" style="left:392px;top:101px;width:85px;color:#c8232b">0.85</div>
<div class="c" style="left:477px;top:101px;width:85px;color:#2b8a1e">1.00</div>
<div class="c" style="left:164px;top:121px;width:58px;color:#1f2a8c">6</div>
<div class="c" style="left:222px;top:121px;width:85px;color:#1f2a8c">0.50</div>
<div class="c" style="left:307px;top:121px;width:85px;color:#3050f4">0.23</div>
<div class="c" style="left:392px;top:121px;width:85px;color:#c8232b">0.77</div>
<div class="c" style="left:477px;top:121px;width:85px;color:#2b8a1e">1.00</div>
<div class="c" style="left:164px;top:141px;width:58px;color:#1f2a8c">7</div>
<div class="c" style="left:222px;top:141px;width:85px;color:#1f2a8c">0.60</div>
<div class="c" style="left:307px;top:141px;width:85px;color:#3050f4">0.32</div>
<div class="c" style="left:392px;top:141px;width:85px;color:#c8232b">0.68</div>
<div class="c" style="left:477px;top:141px;width:85px;color:#2b8a1e">1.00</div>
<div class="c" style="left:164px;top:161px;width:58px;color:#1f2a8c">8</div>
<div class="c" style="left:222px;top:161px;width:85px;color:#1f2a8c">0.70</div>
<div class="c" style="left:307px;top:161px;width:85px;color:#3050f4">0.42</div>
<div class="c" style="left:392px;top:161px;width:85px;color:#c8232b">0.58</div>
<div class="c" style="left:477px;top:161px;width:85px;color:#2b8a1e">1.00</div>
<div class="c" style="left:164px;top:181px;width:58px;color:#1f2a8c">9</div>
<div class="c" style="left:222px;top:181px;width:85px;color:#1f2a8c">0.80</div>
<div class="c" style="left:307px;top:181px;width:85px;color:#3050f4">0.51</div>
<div class="c" style="left:392px;top:181px;width:85px;color:#c8232b">0.49</div>
<div class="c" style="left:477px;top:181px;width:85px;color:#2b8a1e">1.00</div>
<div class="c" style="left:164px;top:201px;width:58px;color:#1f2a8c">10</div>
<div class="c" style="left:222px;top:201px;width:85px;color:#1f2a8c">0.90</div>
<div class="c" style="left:307px;top:201px;width:85px;color:#3050f4">0.61</div>
<div class="c" style="left:392px;top:201px;width:85px;color:#c8232b">0.39</div>
<div class="c" style="left:477px;top:201px;width:85px;color:#2b8a1e">1.00</div>
<div class="c" style="left:164px;top:221px;width:58px;color:#1f2a8c">11</div>
<div class="c" style="left:222px;top:221px;width:85px;color:#1f2a8c">1.00</div>
<div class="c" style="left:307px;top:221px;width:85px;color:#3050f4">0.71</div>
<div class="c" style="left:392px;top:221px;width:85px;color:#c8232b">0.29</div>
<div class="c" style="left:477px;top:221px;width:85px;color:#2b8a1e">1.00</div>
<div class="c" style="left:164px;top:241px;width:58px;color:#1f2a8c">12</div>
<div class="c" style="left:222px;top:241px;width:85px;color:#1f2a8c">1.10</div>
<div class="c" style="left:307px;top:241px;width:85px;color:#3050f4">0.79</div>
<div class="c" style="left:392px;top:241px;width:85px;color:#c8232b">0.21</div>
<div class="c" style="left:477px;top:241px;width:85px;color:#2b8a1e">1.00</div>
<div class="c" style="left:164px;top:261px;width:58px;color:#1f2a8c">13</div>
<div class="c" style="left:222px;top:261px;width:85px;color:#1f2a8c">1.20</div>
<div class="c" style="left:307px;top:261px;width:85px;color:#3050f4">0.87</div>
<div class="c" style="left:392px;top:261px;width:85px;color:#c8232b">0.13</div>
<div class="c" style="left:477px;top:261px;width:85px;color:#2b8a1e">1.00</div>
<svg width="582" height="273" viewBox="5 97 582 273"><rect x="169.5" y="118.5" width="57" height="19" fill="none" stroke="#111" stroke-width="1" stroke-dasharray="2 1"/></svg>
<div style="left:564px;top:2px;width:16px;height:30px;background:#7f7f7f;border-radius:3px"></div>
</div>
<svg width="1200" height="667" viewBox="0 0 1200 667">
<path d="M641.00,327.92 H1154.60" stroke="#828282" stroke-width="1.45" stroke-dasharray="1.5 1.5" fill="none"/>
<path d="M641.00,304.34 H1154.60" stroke="#828282" stroke-width="1.45" stroke-dasharray="1.5 1.5" fill="none"/>
<path d="M641.00,280.76 H1154.60" stroke="#828282" stroke-width="1.45" stroke-dasharray="1.5 1.5" fill="none"/>
<path d="M641.00,257.18 H1154.60" stroke="#828282" stroke-width="1.45" stroke-dasharray="1.5 1.5" fill="none"/>
<path d="M641.00,233.60 H1154.60" stroke="#828282" stroke-width="1.45" stroke-dasharray="1.5 1.5" fill="none"/>
<path d="M641.00,210.02 H1154.60" stroke="#828282" stroke-width="1.45" stroke-dasharray="1.5 1.5" fill="none"/>
<path d="M641.00,186.44 H1154.60" stroke="#828282" stroke-width="1.45" stroke-dasharray="1.5 1.5" fill="none"/>
<path d="M641.00,162.86 H1154.60" stroke="#828282" stroke-width="1.45" stroke-dasharray="1.5 1.5" fill="none"/>
<path d="M641.00,139.28 H1154.60" stroke="#828282" stroke-width="1.45" stroke-dasharray="1.5 1.5" fill="none"/>
<path d="M641.00,115.70 H1154.60" stroke="#828282" stroke-width="1.45" stroke-dasharray="1.5 1.5" fill="none"/>
<path d="M686.51,345.00 V115.70" stroke="#828282" stroke-width="1.45" stroke-dasharray="1.5 1.5" fill="none"/>
<path d="M738.52,345.00 V115.70" stroke="#828282" stroke-width="1.45" stroke-dasharray="1.5 1.5" fill="none"/>
<path d="M790.53,345.00 V115.70" stroke="#828282" stroke-width="1.45" stroke-dasharray="1.5 1.5" fill="none"/>
<path d="M842.54,345.00 V115.70" stroke="#828282" stroke-width="1.45" stroke-dasharray="1.5 1.5" fill="none"/>
<path d="M894.55,345.00 V115.70" stroke="#828282" stroke-width="1.45" stroke-dasharray="1.5 1.5" fill="none"/>
<path d="M946.56,345.00 V115.70" stroke="#828282" stroke-width="1.45" stroke-dasharray="1.5 1.5" fill="none"/>
<path d="M998.57,345.00 V115.70" stroke="#828282" stroke-width="1.45" stroke-dasharray="1.5 1.5" fill="none"/>
<path d="M1050.58,345.00 V115.70" stroke="#828282" stroke-width="1.45" stroke-dasharray="1.5 1.5" fill="none"/>
<path d="M1102.59,345.00 V115.70" stroke="#828282" stroke-width="1.45" stroke-dasharray="1.5 1.5" fill="none"/>
<path d="M1154.60,345.00 V115.70" stroke="#828282" stroke-width="1.45" stroke-dasharray="1.5 1.5" fill="none"/>
<path d="M634.50,115.10 V351.50 H1155.10 M634.50,351.50 h6.6 M634.50,345.61 h3.5 M634.50,339.71 h3.5 M634.50,333.81 h3.5 M634.50,327.92 h6.6 M634.50,322.02 h3.5 M634.50,316.13 h3.5 M634.50,310.24 h3.5 M634.50,304.34 h6.6 M634.50,298.44 h3.5 M634.50,292.55 h3.5 M634.50,286.65 h3.5 M634.50,280.76 h6.6 M634.50,274.87 h3.5 M634.50,268.97 h3.5 M634.50,263.07 h3.5 M634.50,257.18 h6.6 M634.50,251.28 h3.5 M634.50,245.39 h3.5 M634.50,239.50 h3.5 M634.50,233.60 h6.6 M634.50,227.70 h3.5 M634.50,221.81 h3.5 M634.50,215.91 h3.5 M634.50,210.02 h6.6 M634.50,204.12 h3.5 M634.50,198.23 h3.5 M634.50,192.33 h3.5 M634.50,186.44 h6.6 M634.50,180.54 h3.5 M634.50,174.65 h3.5 M634.50,168.75 h3.5 M634.50,162.86 h6.6 M634.50,156.96 h3.5 M634.50,151.07 h3.5 M634.50,145.17 h3.5 M634.50,139.28 h6.6 M634.50,133.38 h3.5 M634.50,127.49 h3.5 M634.50,121.59 h3.5 M634.50,115.70 h6.6 M634.50,351.50 v-6.6 M644.90,351.50 v-3.4 M655.30,351.50 v-3.4 M665.71,351.50 v-3.4 M676.11,351.50 v-3.4 M686.51,351.50 v-6.6 M696.91,351.50 v-3.4 M707.31,351.50 v-3.4 M717.72,351.50 v-3.4 M728.12,351.50 v-3.4 M738.52,351.50 v-6.6 M748.92,351.50 v-3.4 M759.32,351.50 v-3.4 M769.73,351.50 v-3.4 M780.13,351.50 v-3.4 M790.53,351.50 v-6.6 M800.93,351.50 v-3.4 M811.33,351.50 v-3.4 M821.74,351.50 v-3.4 M832.14,351.50 v-3.4 M842.54,351.50 v-6.6 M852.94,351.50 v-3.4 M863.34,351.50 v-3.4 M873.75,351.50 v-3.4 M884.15,351.50 v-3.4 M894.55,351.50 v-6.6 M904.95,351.50 v-3.4 M915.35,351.50 v-3.4 M925.76,351.50 v-3.4 M936.16,351.50 v-3.4 M946.56,351.50 v-6.6 M956.96,351.50 v-3.4 M967.36,351.50 v-3.4 M977.77,351.50 v-3.4 M988.17,351.50 v-3.4 M998.57,351.50 v-6.6 M1008.97,351.50 v-3.4 M1019.37,351.50 v-3.4 M1029.78,351.50 v-3.4 M1040.18,351.50 v-3.4 M1050.58,351.50 v-6.6 M1060.98,351.50 v-3.4 M1071.38,351.50 v-3.4 M1081.79,351.50 v-3.4 M1092.19,351.50 v-3.4 M1102.59,351.50 v-6.6 M1112.99,351.50 v-3.4 M1123.39,351.50 v-3.4 M1133.80,351.50 v-3.4 M1144.20,351.50 v-3.4 M1154.60,351.50 v-6.6" fill="none" stroke="#000" stroke-width="1.15"/>
<text x="630.2" y="357.2" text-anchor="end" font-size="12.3" stroke="#000" stroke-width="0.3">0.0</text>
<text x="630.2" y="333.6" text-anchor="end" font-size="12.3" stroke="#000" stroke-width="0.3">0.2</text>
<text x="630.2" y="310.0" text-anchor="end" font-size="12.3" stroke="#000" stroke-width="0.3">0.4</text>
<text x="630.2" y="286.5" text-anchor="end" font-size="12.3" stroke="#000" stroke-width="0.3">0.6</text>
<text x="630.2" y="262.9" text-anchor="end" font-size="12.3" stroke="#000" stroke-width="0.3">0.8</text>
<text x="630.2" y="239.3" text-anchor="end" font-size="12.3" stroke="#000" stroke-width="0.3">1.0</text>
<text x="630.2" y="215.7" text-anchor="end" font-size="12.3" stroke="#000" stroke-width="0.3">1.2</text>
<text x="630.2" y="192.1" text-anchor="end" font-size="12.3" stroke="#000" stroke-width="0.3">1.4</text>
<text x="630.2" y="168.6" text-anchor="end" font-size="12.3" stroke="#000" stroke-width="0.3">1.6</text>
<text x="630.2" y="145.0" text-anchor="end" font-size="12.3" stroke="#000" stroke-width="0.3">1.8</text>
<text x="630.2" y="121.4" text-anchor="end" font-size="12.3" stroke="#000" stroke-width="0.3">2.0</text>
<text x="634.5" y="364.7" text-anchor="middle" font-size="12.3" stroke="#000" stroke-width="0.3">0</text>
<text x="686.5" y="364.7" text-anchor="middle" font-size="12.3" stroke="#000" stroke-width="0.3">1</text>
<text x="738.5" y="364.7" text-anchor="middle" font-size="12.3" stroke="#000" stroke-width="0.3">2</text>
<text x="790.5" y="364.7" text-anchor="middle" font-size="12.3" stroke="#000" stroke-width="0.3">3</text>
<text x="842.5" y="364.7" text-anchor="middle" font-size="12.3" stroke="#000" stroke-width="0.3">4</text>
<text x="894.5" y="364.7" text-anchor="middle" font-size="12.3" stroke="#000" stroke-width="0.3">5</text>
<text x="946.6" y="364.7" text-anchor="middle" font-size="12.3" stroke="#000" stroke-width="0.3">6</text>
<text x="998.6" y="364.7" text-anchor="middle" font-size="12.3" stroke="#000" stroke-width="0.3">7</text>
<text x="1050.6" y="364.7" text-anchor="middle" font-size="12.3" stroke="#000" stroke-width="0.3">8</text>
<text x="1102.6" y="364.7" text-anchor="middle" font-size="12.3" stroke="#000" stroke-width="0.3">9</text>
<text x="1154.6" y="364.7" text-anchor="middle" font-size="12.3" stroke="#000" stroke-width="0.3">10</text>
<polyline points="634.50,233.60 635.80,233.60 637.10,233.60 638.40,233.60 639.70,233.60 641.00,233.60 642.30,233.60 643.60,233.60 644.90,233.60 646.20,233.60 647.50,233.60 648.80,233.60 650.10,233.60 651.40,233.60 652.70,233.60 654.00,233.60 655.30,233.60 656.60,233.60 657.90,233.60 659.20,233.60 660.50,233.60 661.81,233.60 663.11,233.60 664.41,233.60 665.71,233.60 667.01,233.60 668.31,233.60 669.61,233.60 670.91,233.60 672.21,233.60 673.51,233.60 674.81,233.60 676.11,233.60 677.41,233.60 678.71,233.60 680.01,233.60 681.31,233.60 682.61,233.60 683.91,233.60 685.21,233.60 686.51,233.60 687.81,233.60 689.11,233.60 690.41,233.60 691.71,233.60 693.01,233.60 694.31,233.60 695.61,233.60 696.91,233.60 698.21,233.60 699.51,233.60 700.81,233.60 702.11,233.60 703.41,233.60 704.71,233.60 706.01,233.60 707.31,233.60 708.61,233.60 709.91,233.60 711.21,233.60 712.51,233.60 713.82,233.60 715.12,233.60 716.42,233.60 717.72,233.60 719.02,233.60 720.32,233.60 721.62,233.60 722.92,233.60 724.22,233.60 725.52,233.60 726.82,233.60 728.12,233.60 729.42,233.60 730.72,233.60 732.02,233.60 733.32,233.60 734.62,233.60 735.92,233.60 737.22,233.60 738.52,233.60 739.82,233.60 741.12,233.60 742.42,233.60 743.72,233.60 745.02,233.60 746.32,233.60 747.62,233.60 748.92,233.60 750.22,233.60 751.52,233.60 752.82,233.60 754.12,233.60 755.42,233.60 756.72,233.60 758.02,233.60 759.32,233.60 760.62,233.60 761.92,233.60 763.22,233.60 764.52,233.60 765.83,233.60 767.13,233.60 768.43,233.60 769.73,233.60 771.03,233.60 772.33,233.60 773.63,233.60 774.93,233.60 776.23,233.60 777.53,233.60 778.83,233.60 780.13,233.60 781.43,233.60 782.73,233.60 784.03,233.60 785.33,233.60 786.63,233.60 787.93,233.60 789.23,233.60 790.53,233.60 791.83,233.60 793.13,233.60 794.43,233.60 795.73,233.60 797.03,233.60 798.33,233.60 799.63,233.60 800.93,233.60 802.23,233.60 803.53,233.60 804.83,233.60 806.13,233.60 807.43,233.60 808.73,233.60 810.03,233.60 811.33,233.60 812.63,233.60 813.93,233.60 815.23,233.60 816.53,233.60 817.84,233.60 819.14,233.60 820.44,233.60 821.74,233.60 823.04,233.60 824.34,233.60 825.64,233.60 826.94,233.60 828.24,233.60 829.54,233.60 830.84,233.60 832.14,233.60 833.44,233.60 834.74,233.60 836.04,233.60 837.34,233.60 838.64,233.60 839.94,233.60 841.24,233.60 842.54,233.60 843.84,233.60 845.14,233.60 846.44,233.60 847.74,233.60 849.04,233.60 850.34,233.60 851.64,233.60 852.94,233.60 854.24,233.60 855.54,233.60 856.84,233.60 858.14,233.60 859.44,233.60 860.74,233.60 862.04,233.60 863.34,233.60 864.64,233.60 865.94,233.60 867.24,233.60 868.54,233.60 869.85,233.60 871.15,233.60 872.45,233.60 873.75,233.60 875.05,233.60 876.35,233.60 877.65,233.60 878.95,233.60 880.25,233.60 881.55,233.60 882.85,233.60 884.15,233.60 885.45,233.60 886.75,233.60 888.05,233.60 889.35,233.60 890.65,233.60 891.95,233.60 893.25,233.60 894.55,233.60 895.85,233.60 897.15,233.60 898.45,233.60 899.75,233.60 901.05,233.60 902.35,233.60 903.65,233.60 904.95,233.60 906.25,233.60 907.55,233.60 908.85,233.60 910.15,233.60 911.45,233.60 912.75,233.60 914.05,233.60 915.35,233.60 916.65,233.60 917.95,233.60 919.25,233.60 920.55,233.60 921.86,233.60 923.16,233.60 924.46,233.60 925.76,233.60 927.06,233.60 928.36,233.60 929.66,233.60 930.96,233.60 932.26,233.60 933.56,233.60 934.86,233.60 936.16,233.60 937.46,233.60 938.76,233.60 940.06,233.60 941.36,233.60 942.66,233.60 943.96,233.60 945.26,233.60 946.56,233.60 947.86,233.60 949.16,233.60 950.46,233.60 951.76,233.60 953.06,233.60 954.36,233.60 955.66,233.60 956.96,233.60 958.26,233.60 959.56,233.60 960.86,233.60 962.16,233.60 963.46,233.60 964.76,233.60 966.06,233.60 967.36,233.60 968.66,233.60 969.96,233.60 971.26,233.60 972.56,233.60 973.87,233.60 975.17,233.60 976.47,233.60 977.77,233.60 979.07,233.60 980.37,233.60 981.67,233.60 982.97,233.60 984.27,233.60 985.57,233.60 986.87,233.60 988.17,233.60 989.47,233.60 990.77,233.60 992.07,233.60 993.37,233.60 994.67,233.60 995.97,233.60 997.27,233.60 998.57,233.60 999.87,233.60 1001.17,233.60 1002.47,233.60 1003.77,233.60 1005.07,233.60 1006.37,233.60 1007.67,233.60 1008.97,233.60 1010.27,233.60 1011.57,233.60 1012.87,233.60 1014.17,233.60 1015.47,233.60 1016.77,233.60 1018.07,233.60 1019.37,233.60 1020.67,233.60 1021.97,233.60 1023.27,233.60 1024.57,233.60 1025.88,233.60 1027.18,233.60 1028.48,233.60 1029.78,233.60 1031.08,233.60 1032.38,233.60 1033.68,233.60 1034.98,233.60 1036.28,233.60 1037.58,233.60 1038.88,233.60 1040.18,233.60 1041.48,233.60 1042.78,233.60 1044.08,233.60 1045.38,233.60 1046.68,233.60 1047.98,233.60 1049.28,233.60 1050.58,233.60 1051.88,233.60 1053.18,233.60 1054.48,233.60 1055.78,233.60 1057.08,233.60 1058.38,233.60 1059.68,233.60 1060.98,233.60 1062.28,233.60 1063.58,233.60 1064.88,233.60 1066.18,233.60 1067.48,233.60 1068.78,233.60 1070.08,233.60 1071.38,233.60 1072.68,233.60 1073.98,233.60 1075.28,233.60 1076.59,233.60 1077.89,233.60 1079.19,233.60 1080.49,233.60 1081.79,233.60 1083.09,233.60 1084.39,233.60 1085.69,233.60 1086.99,233.60 1088.29,233.60 1089.59,233.60 1090.89,233.60 1092.19,233.60 1093.49,233.60 1094.79,233.60 1096.09,233.60 1097.39,233.60 1098.69,233.60 1099.99,233.60 1101.29,233.60 1102.59,233.60 1103.89,233.60 1105.19,233.60 1106.49,233.60 1107.79,233.60 1109.09,233.60 1110.39,233.60 1111.69,233.60 1112.99,233.60 1114.29,233.60 1115.59,233.60 1116.89,233.60 1118.19,233.60 1119.49,233.60 1120.79,233.60 1122.09,233.60 1123.39,233.60 1124.69,233.60 1125.99,233.60 1127.29,233.60 1128.59,233.60 1129.90,233.60 1131.20,233.60 1132.50,233.60 1133.80,233.60 1135.10,233.60 1136.40,233.60 1137.70,233.60 1139.00,233.60 1140.30,233.60 1141.60,233.60 1142.90,233.60 1144.20,233.60 1145.50,233.60 1146.80,233.60 1148.10,233.60 1149.40,233.60 1150.70,233.60 1152.00,233.60 1153.30,233.60 1154.60,233.60" fill="none" stroke="#2b8a1e" stroke-width="1.1" stroke-opacity="0.7" transform="translate(0,-0.3)"/>
<g fill="#2b8a1e"><circle cx="634.50" cy="234.05" r="1.55"/><circle cx="639.70" cy="234.05" r="1.55"/><circle cx="644.90" cy="234.05" r="1.55"/><circle cx="650.10" cy="234.05" r="1.55"/><circle cx="655.30" cy="234.05" r="1.55"/><circle cx="660.50" cy="234.05" r="1.55"/><circle cx="665.71" cy="234.05" r="1.55"/><circle cx="670.91" cy="234.05" r="1.55"/><circle cx="676.11" cy="234.05" r="1.55"/><circle cx="681.31" cy="234.05" r="1.55"/><circle cx="686.51" cy="234.05" r="1.55"/><circle cx="691.71" cy="234.05" r="1.55"/><circle cx="696.91" cy="234.05" r="1.55"/><circle cx="702.11" cy="234.05" r="1.55"/><circle cx="707.31" cy="234.05" r="1.55"/><circle cx="712.51" cy="234.05" r="1.55"/><circle cx="717.72" cy="234.05" r="1.55"/><circle cx="722.92" cy="234.05" r="1.55"/><circle cx="728.12" cy="234.05" r="1.55"/><circle cx="733.32" cy="234.05" r="1.55"/><circle cx="738.52" cy="234.05" r="1.55"/><circle cx="743.72" cy="234.05" r="1.55"/><circle cx="748.92" cy="234.05" r="1.55"/><circle cx="754.12" cy="234.05" r="1.55"/><circle cx="759.32" cy="234.05" r="1.55"/><circle cx="764.52" cy="234.05" r="1.55"/><circle cx="769.73" cy="234.05" r="1.55"/><circle cx="774.93" cy="234.05" r="1.55"/><circle cx="780.13" cy="234.05" r="1.55"/><circle cx="785.33" cy="234.05" r="1.55"/><circle cx="790.53" cy="234.05" r="1.55"/><circle cx="795.73" cy="234.05" r="1.55"/><circle cx="800.93" cy="234.05" r="1.55"/><circle cx="806.13" cy="234.05" r="1.55"/><circle cx="811.33" cy="234.05" r="1.55"/><circle cx="816.53" cy="234.05" r="1.55"/><circle cx="821.74" cy="234.05" r="1.55"/><circle cx="826.94" cy="234.05" r="1.55"/><circle cx="832.14" cy="234.05" r="1.55"/><circle cx="837.34" cy="234.05" r="1.55"/><circle cx="842.54" cy="234.05" r="1.55"/><circle cx="847.74" cy="234.05" r="1.55"/><circle cx="852.94" cy="234.05" r="1.55"/><circle cx="858.14" cy="234.05" r="1.55"/><circle cx="863.34" cy="234.05" r="1.55"/><circle cx="868.54" cy="234.05" r="1.55"/><circle cx="873.75" cy="234.05" r="1.55"/><circle cx="878.95" cy="234.05" r="1.55"/><circle cx="884.15" cy="234.05" r="1.55"/><circle cx="889.35" cy="234.05" r="1.55"/><circle cx="894.55" cy="234.05" r="1.55"/><circle cx="899.75" cy="234.05" r="1.55"/><circle cx="904.95" cy="234.05" r="1.55"/><circle cx="910.15" cy="234.05" r="1.55"/><circle cx="915.35" cy="234.05" r="1.55"/><circle cx="920.55" cy="234.05" r="1.55"/><circle cx="925.76" cy="234.05" r="1.55"/><circle cx="930.96" cy="234.05" r="1.55"/><circle cx="936.16" cy="234.05" r="1.55"/><circle cx="941.36" cy="234.05" r="1.55"/><circle cx="946.56" cy="234.05" r="1.55"/><circle cx="951.76" cy="234.05" r="1.55"/><circle cx="956.96" cy="234.05" r="1.55"/><circle cx="962.16" cy="234.05" r="1.55"/><circle cx="967.36" cy="234.05" r="1.55"/><circle cx="972.56" cy="234.05" r="1.55"/><circle cx="977.77" cy="234.05" r="1.55"/><circle cx="982.97" cy="234.05" r="1.55"/><circle cx="988.17" cy="234.05" r="1.55"/><circle cx="993.37" cy="234.05" r="1.55"/><circle cx="998.57" cy="234.05" r="1.55"/><circle cx="1003.77" cy="234.05" r="1.55"/><circle cx="1008.97" cy="234.05" r="1.55"/><circle cx="1014.17" cy="234.05" r="1.55"/><circle cx="1019.37" cy="234.05" r="1.55"/><circle cx="1024.57" cy="234.05" r="1.55"/><circle cx="1029.78" cy="234.05" r="1.55"/><circle cx="1034.98" cy="234.05" r="1.55"/><circle cx="1040.18" cy="234.05" r="1.55"/><circle cx="1045.38" cy="234.05" r="1.55"/><circle cx="1050.58" cy="234.05" r="1.55"/><circle cx="1055.78" cy="234.05" r="1.55"/><circle cx="1060.98" cy="234.05" r="1.55"/><circle cx="1066.18" cy="234.05" r="1.55"/><circle cx="1071.38" cy="234.05" r="1.55"/><circle cx="1076.59" cy="234.05" r="1.55"/><circle cx="1081.79" cy="234.05" r="1.55"/><circle cx="1086.99" cy="234.05" r="1.55"/><circle cx="1092.19" cy="234.05" r="1.55"/><circle cx="1097.39" cy="234.05" r="1.55"/><circle cx="1102.59" cy="234.05" r="1.55"/><circle cx="1107.79" cy="234.05" r="1.55"/><circle cx="1112.99" cy="234.05" r="1.55"/><circle cx="1118.19" cy="234.05" r="1.55"/><circle cx="1123.39" cy="234.05" r="1.55"/><circle cx="1128.59" cy="234.05" r="1.55"/><circle cx="1133.80" cy="234.05" r="1.55"/><circle cx="1139.00" cy="234.05" r="1.55"/><circle cx="1144.20" cy="234.05" r="1.55"/><circle cx="1149.40" cy="234.05" r="1.55"/><circle cx="1154.60" cy="234.05" r="1.55"/></g>
<text x="645.0" y="129.3" font-size="12.2" font-weight="bold" fill="#2b8a1e">f(x)</text>
<text x="1148.6" y="343.0" font-size="13" fill="#1f2a8c" stroke="#1f2a8c" stroke-width="0.3">x</text>
<path d="M52.20,624.87 H546.70" stroke="#828282" stroke-width="1.45" stroke-dasharray="1.5 1.5" fill="none"/>
<path d="M52.20,605.24 H546.70" stroke="#828282" stroke-width="1.45" stroke-dasharray="1.5 1.5" fill="none"/>
<path d="M52.20,585.61 H546.70" stroke="#828282" stroke-width="1.45" stroke-dasharray="1.5 1.5" fill="none"/>
<path d="M52.20,565.98 H546.70" stroke="#828282" stroke-width="1.45" stroke-dasharray="1.5 1.5" fill="none"/>
<path d="M52.20,546.35 H546.70" stroke="#828282" stroke-width="1.45" stroke-dasharray="1.5 1.5" fill="none"/>
<path d="M52.20,526.72 H546.70" stroke="#828282" stroke-width="1.45" stroke-dasharray="1.5 1.5" fill="none"/>
<path d="M52.20,507.09 H546.70" stroke="#828282" stroke-width="1.45" stroke-dasharray="1.5 1.5" fill="none"/>
<path d="M52.20,487.46 H546.70" stroke="#828282" stroke-width="1.45" stroke-dasharray="1.5 1.5" fill="none"/>
<path d="M52.20,467.83 H546.70" stroke="#828282" stroke-width="1.45" stroke-dasharray="1.5 1.5" fill="none"/>
<path d="M52.20,448.20 H546.70" stroke="#828282" stroke-width="1.45" stroke-dasharray="1.5 1.5" fill="none"/>
<path d="M95.80,638.00 V448.20" stroke="#828282" stroke-width="1.45" stroke-dasharray="1.5 1.5" fill="none"/>
<path d="M145.90,638.00 V448.20" stroke="#828282" stroke-width="1.45" stroke-dasharray="1.5 1.5" fill="none"/>
<path d="M196.00,638.00 V448.20" stroke="#828282" stroke-width="1.45" stroke-dasharray="1.5 1.5" fill="none"/>
<path d="M246.10,638.00 V448.20" stroke="#828282" stroke-width="1.45" stroke-dasharray="1.5 1.5" fill="none"/>
<path d="M296.20,638.00 V448.20" stroke="#828282" stroke-width="1.45" stroke-dasharray="1.5 1.5" fill="none"/>
<path d="M346.30,638.00 V448.20" stroke="#828282" stroke-width="1.45" stroke-dasharray="1.5 1.5" fill="none"/>
<path d="M396.40,638.00 V448.20" stroke="#828282" stroke-width="1.45" stroke-dasharray="1.5 1.5" fill="none"/>
<path d="M446.50,638.00 V448.20" stroke="#828282" stroke-width="1.45" stroke-dasharray="1.5 1.5" fill="none"/>
<path d="M496.60,638.00 V448.20" stroke="#828282" stroke-width="1.45" stroke-dasharray="1.5 1.5" fill="none"/>
<path d="M546.70,638.00 V448.20" stroke="#828282" stroke-width="1.45" stroke-dasharray="1.5 1.5" fill="none"/>
<path d="M45.70,447.60 V644.50 H547.20 M45.70,644.50 h6.6 M45.70,640.57 h3.5 M45.70,636.65 h3.5 M45.70,632.72 h3.5 M45.70,628.80 h3.5 M45.70,624.87 h6.6 M45.70,620.94 h3.5 M45.70,617.02 h3.5 M45.70,613.09 h3.5 M45.70,609.17 h3.5 M45.70,605.24 h6.6 M45.70,601.31 h3.5 M45.70,597.39 h3.5 M45.70,593.46 h3.5 M45.70,589.54 h3.5 M45.70,585.61 h6.6 M45.70,581.68 h3.5 M45.70,577.76 h3.5 M45.70,573.83 h3.5 M45.70,569.91 h3.5 M45.70,565.98 h6.6 M45.70,562.05 h3.5 M45.70,558.13 h3.5 M45.70,554.20 h3.5 M45.70,550.28 h3.5 M45.70,546.35 h6.6 M45.70,542.42 h3.5 M45.70,538.50 h3.5 M45.70,534.57 h3.5 M45.70,530.65 h3.5 M45.70,526.72 h6.6 M45.70,522.79 h3.5 M45.70,518.87 h3.5 M45.70,514.94 h3.5 M45.70,511.02 h3.5 M45.70,507.09 h6.6 M45.70,503.16 h3.5 M45.70,499.24 h3.5 M45.70,495.31 h3.5 M45.70,491.39 h3.5 M45.70,487.46 h6.6 M45.70,483.53 h3.5 M45.70,479.61 h3.5 M45.70,475.68 h3.5 M45.70,471.76 h3.5 M45.70,467.83 h6.6 M45.70,463.90 h3.5 M45.70,459.98 h3.5 M45.70,456.05 h3.5 M45.70,452.13 h3.5 M45.70,448.20 h6.6 M45.70,644.50 v-6.6 M55.72,644.50 v-3.4 M65.74,644.50 v-3.4 M75.76,644.50 v-3.4 M85.78,644.50 v-3.4 M95.80,644.50 v-6.6 M105.82,644.50 v-3.4 M115.84,644.50 v-3.4 M125.86,644.50 v-3.4 M135.88,644.50 v-3.4 M145.90,644.50 v-6.6 M155.92,644.50 v-3.4 M165.94,644.50 v-3.4 M175.96,644.50 v-3.4 M185.98,644.50 v-3.4 M196.00,644.50 v-6.6 M206.02,644.50 v-3.4 M216.04,644.50 v-3.4 M226.06,644.50 v-3.4 M236.08,644.50 v-3.4 M246.10,644.50 v-6.6 M256.12,644.50 v-3.4 M266.14,644.50 v-3.4 M276.16,644.50 v-3.4 M286.18,644.50 v-3.4 M296.20,644.50 v-6.6 M306.22,644.50 v-3.4 M316.24,644.50 v-3.4 M326.26,644.50 v-3.4 M336.28,644.50 v-3.4 M346.30,644.50 v-6.6 M356.32,644.50 v-3.4 M366.34,644.50 v-3.4 M376.36,644.50 v-3.4 M386.38,644.50 v-3.4 M396.40,644.50 v-6.6 M406.42,644.50 v-3.4 M416.44,644.50 v-3.4 M426.46,644.50 v-3.4 M436.48,644.50 v-3.4 M446.50,644.50 v-6.6 M456.52,644.50 v-3.4 M466.54,644.50 v-3.4 M476.56,644.50 v-3.4 M486.58,644.50 v-3.4 M496.60,644.50 v-6.6 M506.62,644.50 v-3.4 M516.64,644.50 v-3.4 M526.66,644.50 v-3.4 M536.68,644.50 v-3.4 M546.70,644.50 v-6.6" fill="none" stroke="#000" stroke-width="1.15"/>
<text x="41.4" y="650.2" text-anchor="end" font-size="12.3" stroke="#000" stroke-width="0.3">0.0</text>
<text x="41.4" y="630.6" text-anchor="end" font-size="12.3" stroke="#000" stroke-width="0.3">0.1</text>
<text x="41.4" y="610.9" text-anchor="end" font-size="12.3" stroke="#000" stroke-width="0.3">0.2</text>
<text x="41.4" y="591.3" text-anchor="end" font-size="12.3" stroke="#000" stroke-width="0.3">0.3</text>
<text x="41.4" y="571.7" text-anchor="end" font-size="12.3" stroke="#000" stroke-width="0.3">0.4</text>
<text x="41.4" y="552.1" text-anchor="end" font-size="12.3" stroke="#000" stroke-width="0.3">0.5</text>
<text x="41.4" y="532.4" text-anchor="end" font-size="12.3" stroke="#000" stroke-width="0.3">0.6</text>
<text x="41.4" y="512.8" text-anchor="end" font-size="12.3" stroke="#000" stroke-width="0.3">0.7</text>
<text x="41.4" y="493.2" text-anchor="end" font-size="12.3" stroke="#000" stroke-width="0.3">0.8</text>
<text x="41.4" y="473.5" text-anchor="end" font-size="12.3" stroke="#000" stroke-width="0.3">0.9</text>
<text x="41.4" y="453.9" text-anchor="end" font-size="12.3" stroke="#000" stroke-width="0.3">1.0</text>
<text x="45.7" y="657.7" text-anchor="middle" font-size="12.3" stroke="#000" stroke-width="0.3">0</text>
<text x="95.8" y="657.7" text-anchor="middle" font-size="12.3" stroke="#000" stroke-width="0.3">1</text>
<text x="145.9" y="657.7" text-anchor="middle" font-size="12.3" stroke="#000" stroke-width="0.3">2</text>
<text x="196.0" y="657.7" text-anchor="middle" font-size="12.3" stroke="#000" stroke-width="0.3">3</text>
<text x="246.1" y="657.7" text-anchor="middle" font-size="12.3" stroke="#000" stroke-width="0.3">4</text>
<text x="296.2" y="657.7" text-anchor="middle" font-size="12.3" stroke="#000" stroke-width="0.3">5</text>
<text x="346.3" y="657.7" text-anchor="middle" font-size="12.3" stroke="#000" stroke-width="0.3">6</text>
<text x="396.4" y="657.7" text-anchor="middle" font-size="12.3" stroke="#000" stroke-width="0.3">7</text>
<text x="446.5" y="657.7" text-anchor="middle" font-size="12.3" stroke="#000" stroke-width="0.3">8</text>
<text x="496.6" y="657.7" text-anchor="middle" font-size="12.3" stroke="#000" stroke-width="0.3">9</text>
<text x="546.7" y="657.7" text-anchor="middle" font-size="12.3" stroke="#000" stroke-width="0.3">10</text>
<polyline points="45.70,644.50 46.95,644.38 48.21,644.01 49.46,643.40 50.71,642.54 51.96,641.45 53.22,640.12 54.47,638.55 55.72,636.75 56.97,634.73 58.23,632.48 59.48,630.03 60.73,627.36 61.98,624.49 63.24,621.42 64.49,618.17 65.74,614.73 66.99,611.13 68.25,607.36 69.50,603.44 70.75,599.38 72.00,595.19 73.26,590.87 74.51,586.44 75.76,581.92 77.01,577.30 78.27,572.61 79.52,567.85 80.77,563.03 82.02,558.18 83.28,553.29 84.53,548.39 85.78,543.48 87.03,538.58 88.29,533.70 89.54,528.86 90.79,524.05 92.04,519.30 93.30,514.62 94.55,510.02 95.80,505.51 97.05,501.10 98.31,496.80 99.56,492.63 100.81,488.59 102.06,484.69 103.32,480.96 104.57,477.38 105.82,473.97 107.07,470.75 108.33,467.72 109.58,464.88 110.83,462.25 112.08,459.82 113.34,457.62 114.59,455.63 115.84,453.87 117.09,452.34 118.35,451.05 119.60,450.00 120.85,449.18 122.10,448.61 123.36,448.28 124.61,448.20 125.86,448.37 127.11,448.78 128.37,449.43 129.62,450.32 130.87,451.46 132.12,452.83 133.38,454.44 134.63,456.27 135.88,458.33 137.13,460.61 138.39,463.11 139.64,465.81 140.89,468.72 142.14,471.81 143.40,475.10 144.65,478.56 145.90,482.19 147.15,485.99 148.41,489.93 149.66,494.02 150.91,498.23 152.16,502.57 153.42,507.01 154.67,511.55 155.92,516.19 157.17,520.89 158.43,525.66 159.68,530.48 160.93,535.34 162.18,540.23 163.44,545.13 164.69,550.04 165.94,554.94 167.19,559.81 168.45,564.66 169.70,569.45 170.95,574.19 172.20,578.86 173.46,583.45 174.71,587.94 175.96,592.33 177.21,596.61 178.47,600.76 179.72,604.78 180.97,608.65 182.22,612.36 183.48,615.91 184.73,619.28 185.98,622.47 187.23,625.47 188.49,628.28 189.74,630.88 190.99,633.26 192.24,635.43 193.50,637.38 194.75,639.10 196.00,640.59 197.25,641.84 198.51,642.86 199.76,643.63 201.01,644.16 202.26,644.45 203.52,644.49 204.77,644.28 206.02,643.83 207.27,643.14 208.53,642.20 209.78,641.03 211.03,639.62 212.28,637.97 213.54,636.10 214.79,634.00 216.04,631.68 217.29,629.15 218.55,626.41 219.80,623.48 221.05,620.35 222.30,617.03 223.56,613.54 224.81,609.88 226.06,606.06 227.31,602.09 228.57,597.98 229.82,593.75 231.07,589.39 232.32,584.93 233.58,580.37 234.83,575.73 236.08,571.01 237.33,566.23 238.59,561.40 239.84,556.54 241.09,551.65 242.34,546.74 243.60,541.83 244.85,536.94 246.10,532.07 247.35,527.23 248.61,522.45 249.86,517.72 251.11,513.06 252.36,508.49 253.62,504.01 254.87,499.64 256.12,495.38 257.37,491.25 258.63,487.26 259.88,483.42 261.13,479.73 262.38,476.21 263.64,472.87 264.89,469.71 266.14,466.74 267.39,463.97 268.65,461.41 269.90,459.06 271.15,456.92 272.40,455.01 273.66,453.33 274.91,451.88 276.16,450.67 277.41,449.70 278.67,448.96 279.92,448.47 281.17,448.23 282.42,448.23 283.68,448.48 284.93,448.97 286.18,449.70 287.43,450.68 288.69,451.89 289.94,453.35 291.19,455.03 292.44,456.94 293.70,459.08 294.95,461.43 296.20,464.00 297.45,466.77 298.71,469.74 299.96,472.90 301.21,476.24 302.46,479.77 303.72,483.45 304.97,487.30 306.22,491.29 307.47,495.42 308.73,499.68 309.98,504.05 311.23,508.53 312.48,513.10 313.74,517.76 314.99,522.49 316.24,527.28 317.49,532.11 318.75,536.98 320.00,541.88 321.25,546.78 322.50,551.69 323.76,556.58 325.01,561.45 326.26,566.27 327.51,571.05 328.77,575.77 330.02,580.41 331.27,584.97 332.52,589.43 333.78,593.79 335.03,598.02 336.28,602.13 337.53,606.09 338.79,609.91 340.04,613.57 341.29,617.06 342.54,620.37 343.80,623.50 345.05,626.44 346.30,629.17 347.55,631.70 348.81,634.02 350.06,636.11 351.31,637.99 352.56,639.63 353.82,641.04 355.07,642.21 356.32,643.14 357.57,643.84 358.83,644.28 360.08,644.49 361.33,644.44 362.58,644.16 363.84,643.62 365.09,642.85 366.34,641.83 367.59,640.58 368.85,639.09 370.10,637.37 371.35,635.42 372.60,633.24 373.86,630.85 375.11,628.25 376.36,625.45 377.61,622.44 378.87,619.25 380.12,615.88 381.37,612.33 382.62,608.61 383.88,604.74 385.13,600.73 386.38,596.57 387.63,592.30 388.89,587.90 390.14,583.41 391.39,578.82 392.64,574.15 393.90,569.41 395.15,564.61 396.40,559.77 397.65,554.89 398.91,550.00 400.16,545.09 401.41,540.19 402.66,535.30 403.92,530.44 405.17,525.62 406.42,520.85 407.67,516.14 408.93,511.51 410.18,506.97 411.43,502.53 412.68,498.19 413.94,493.98 415.19,489.90 416.44,485.95 417.69,482.16 418.95,478.53 420.20,475.07 421.45,471.79 422.70,468.69 423.96,465.79 425.21,463.09 426.46,460.59 427.71,458.31 428.97,456.26 430.22,454.42 431.47,452.82 432.72,451.45 433.98,450.31 435.23,449.42 436.48,448.77 437.73,448.36 438.99,448.20 440.24,448.29 441.49,448.62 442.74,449.19 444.00,450.00 445.25,451.06 446.50,452.36 447.75,453.89 449.01,455.65 450.26,457.63 451.51,459.84 452.76,462.27 454.02,464.90 455.27,467.74 456.52,470.78 457.77,474.00 459.03,477.41 460.28,480.99 461.53,484.73 462.78,488.62 464.04,492.66 465.29,496.84 466.54,501.13 467.79,505.54 469.05,510.06 470.30,514.66 471.55,519.34 472.80,524.09 474.06,528.90 475.31,533.75 476.56,538.63 477.81,543.53 479.07,548.43 480.32,553.34 481.57,558.22 482.82,563.08 484.08,567.89 485.33,572.65 486.58,577.34 487.83,581.96 489.09,586.48 490.34,590.91 491.59,595.22 492.84,599.42 494.10,603.48 495.35,607.40 496.60,611.16 497.85,614.76 499.11,618.19 500.36,621.45 501.61,624.51 502.86,627.38 504.12,630.05 505.37,632.51 506.62,634.75 507.87,636.77 509.13,638.56 510.38,640.13 511.63,641.46 512.88,642.55 514.14,643.40 515.39,644.01 516.64,644.38 517.89,644.50 519.15,644.38 520.40,644.01 521.65,643.39 522.90,642.53 524.16,641.44 525.41,640.10 526.66,638.53 527.91,636.74 529.17,634.71 530.42,632.46 531.67,630.00 532.92,627.33 534.18,624.46 535.43,621.39 536.68,618.14 537.93,614.70 539.19,611.09 540.44,607.33 541.69,603.41 542.94,599.34 544.20,595.15 545.45,590.83 546.70,586.40" fill="none" stroke="#3050f4" stroke-width="1.2" stroke-linejoin="round"/>
<g fill="#3050f4"><circle cx="46.00" cy="644.85" r="1.7"/><circle cx="51.01" cy="642.89" r="1.7"/><circle cx="56.02" cy="637.10" r="1.7"/><circle cx="61.03" cy="627.71" r="1.7"/><circle cx="66.04" cy="615.08" r="1.7"/><circle cx="71.05" cy="599.73" r="1.7"/><circle cx="76.06" cy="582.27" r="1.7"/><circle cx="81.07" cy="563.38" r="1.7"/><circle cx="86.08" cy="543.83" r="1.7"/><circle cx="91.09" cy="524.40" r="1.7"/><circle cx="96.10" cy="505.86" r="1.7"/><circle cx="101.11" cy="488.94" r="1.7"/><circle cx="106.12" cy="474.32" r="1.7"/><circle cx="111.13" cy="462.60" r="1.7"/><circle cx="116.14" cy="454.22" r="1.7"/><circle cx="121.15" cy="449.53" r="1.7"/><circle cx="126.16" cy="448.72" r="1.7"/><circle cx="131.17" cy="451.81" r="1.7"/><circle cx="136.18" cy="458.68" r="1.7"/><circle cx="141.19" cy="469.07" r="1.7"/><circle cx="146.20" cy="482.54" r="1.7"/><circle cx="151.21" cy="498.58" r="1.7"/><circle cx="156.22" cy="516.54" r="1.7"/><circle cx="161.23" cy="535.69" r="1.7"/><circle cx="166.24" cy="555.29" r="1.7"/><circle cx="171.25" cy="574.54" r="1.7"/><circle cx="176.26" cy="592.68" r="1.7"/><circle cx="181.27" cy="609.00" r="1.7"/><circle cx="186.28" cy="622.82" r="1.7"/><circle cx="191.29" cy="633.61" r="1.7"/><circle cx="196.30" cy="640.94" r="1.7"/><circle cx="201.31" cy="644.51" r="1.7"/><circle cx="206.32" cy="644.18" r="1.7"/><circle cx="211.33" cy="639.97" r="1.7"/><circle cx="216.34" cy="632.03" r="1.7"/><circle cx="221.35" cy="620.70" r="1.7"/><circle cx="226.36" cy="606.41" r="1.7"/><circle cx="231.37" cy="589.74" r="1.7"/><circle cx="236.38" cy="571.36" r="1.7"/><circle cx="241.39" cy="552.00" r="1.7"/><circle cx="246.40" cy="532.42" r="1.7"/><circle cx="251.41" cy="513.41" r="1.7"/><circle cx="256.42" cy="495.73" r="1.7"/><circle cx="261.43" cy="480.08" r="1.7"/><circle cx="266.44" cy="467.09" r="1.7"/><circle cx="271.45" cy="457.27" r="1.7"/><circle cx="276.46" cy="451.02" r="1.7"/><circle cx="281.47" cy="448.58" r="1.7"/><circle cx="286.48" cy="450.05" r="1.7"/><circle cx="291.49" cy="455.38" r="1.7"/><circle cx="296.50" cy="464.35" r="1.7"/><circle cx="301.51" cy="476.59" r="1.7"/><circle cx="306.52" cy="491.64" r="1.7"/><circle cx="311.53" cy="508.88" r="1.7"/><circle cx="316.54" cy="527.63" r="1.7"/><circle cx="321.55" cy="547.13" r="1.7"/><circle cx="326.56" cy="566.62" r="1.7"/><circle cx="331.57" cy="585.32" r="1.7"/><circle cx="336.58" cy="602.48" r="1.7"/><circle cx="341.59" cy="617.41" r="1.7"/><circle cx="346.60" cy="629.52" r="1.7"/><circle cx="351.61" cy="638.34" r="1.7"/><circle cx="356.62" cy="643.49" r="1.7"/><circle cx="361.63" cy="644.79" r="1.7"/><circle cx="366.64" cy="642.18" r="1.7"/><circle cx="371.65" cy="635.77" r="1.7"/><circle cx="376.66" cy="625.80" r="1.7"/><circle cx="381.67" cy="612.68" r="1.7"/><circle cx="386.68" cy="596.92" r="1.7"/><circle cx="391.69" cy="579.17" r="1.7"/><circle cx="396.70" cy="560.12" r="1.7"/><circle cx="401.71" cy="540.54" r="1.7"/><circle cx="406.72" cy="521.20" r="1.7"/><circle cx="411.73" cy="502.88" r="1.7"/><circle cx="416.74" cy="486.30" r="1.7"/><circle cx="421.75" cy="472.14" r="1.7"/><circle cx="426.76" cy="460.94" r="1.7"/><circle cx="431.77" cy="453.17" r="1.7"/><circle cx="436.78" cy="449.12" r="1.7"/><circle cx="441.79" cy="448.97" r="1.7"/><circle cx="446.80" cy="452.71" r="1.7"/><circle cx="451.81" cy="460.19" r="1.7"/><circle cx="456.82" cy="471.13" r="1.7"/><circle cx="461.83" cy="485.08" r="1.7"/><circle cx="466.84" cy="501.48" r="1.7"/><circle cx="471.85" cy="519.69" r="1.7"/><circle cx="476.86" cy="538.98" r="1.7"/><circle cx="481.87" cy="558.57" r="1.7"/><circle cx="486.88" cy="577.69" r="1.7"/><circle cx="491.89" cy="595.57" r="1.7"/><circle cx="496.90" cy="611.51" r="1.7"/><circle cx="501.91" cy="624.86" r="1.7"/><circle cx="506.92" cy="635.10" r="1.7"/><circle cx="511.93" cy="641.81" r="1.7"/><circle cx="516.94" cy="644.73" r="1.7"/><circle cx="521.95" cy="643.74" r="1.7"/><circle cx="526.96" cy="638.88" r="1.7"/><circle cx="531.97" cy="630.35" r="1.7"/><circle cx="536.98" cy="618.49" r="1.7"/><circle cx="541.99" cy="603.76" r="1.7"/><circle cx="547.00" cy="586.75" r="1.7"/></g>
<text x="56.5" y="461.0" font-size="12.2" font-weight="bold" fill="#3050f4">f1(x)</text>
<text x="539.5" y="636.0" font-size="13" fill="#1f2a8c" stroke="#1f2a8c" stroke-width="0.3">x</text>
<path d="M640.90,625.80 H1154.80" stroke="#828282" stroke-width="1.45" stroke-dasharray="1.5 1.5" fill="none"/>
<path d="M640.90,607.11 H1154.80" stroke="#828282" stroke-width="1.45" stroke-dasharray="1.5 1.5" fill="none"/>
<path d="M640.90,588.41 H1154.80" stroke="#828282" stroke-width="1.45" stroke-dasharray="1.5 1.5" fill="none"/>
<path d="M640.90,569.72 H1154.80" stroke="#828282" stroke-width="1.45" stroke-dasharray="1.5 1.5" fill="none"/>
<path d="M640.90,551.02 H1154.80" stroke="#828282" stroke-width="1.45" stroke-dasharray="1.5 1.5" fill="none"/>
<path d="M640.90,532.33 H1154.80" stroke="#828282" stroke-width="1.45" stroke-dasharray="1.5 1.5" fill="none"/>
<path d="M640.90,513.63 H1154.80" stroke="#828282" stroke-width="1.45" stroke-dasharray="1.5 1.5" fill="none"/>
<path d="M640.90,494.94 H1154.80" stroke="#828282" stroke-width="1.45" stroke-dasharray="1.5 1.5" fill="none"/>
<path d="M640.90,476.24 H1154.80" stroke="#828282" stroke-width="1.45" stroke-dasharray="1.5 1.5" fill="none"/>
<path d="M640.90,457.55 H1154.80" stroke="#828282" stroke-width="1.45" stroke-dasharray="1.5 1.5" fill="none"/>
<path d="M683.96,638.00 V448.20" stroke="#828282" stroke-width="1.45" stroke-dasharray="1.5 1.5" fill="none"/>
<path d="M733.52,638.00 V448.20" stroke="#828282" stroke-width="1.45" stroke-dasharray="1.5 1.5" fill="none"/>
<path d="M783.09,638.00 V448.20" stroke="#828282" stroke-width="1.45" stroke-dasharray="1.5 1.5" fill="none"/>
<path d="M832.65,638.00 V448.20" stroke="#828282" stroke-width="1.45" stroke-dasharray="1.5 1.5" fill="none"/>
<path d="M882.21,638.00 V448.20" stroke="#828282" stroke-width="1.45" stroke-dasharray="1.5 1.5" fill="none"/>
<path d="M931.77,638.00 V448.20" stroke="#828282" stroke-width="1.45" stroke-dasharray="1.5 1.5" fill="none"/>
<path d="M981.33,638.00 V448.20" stroke="#828282" stroke-width="1.45" stroke-dasharray="1.5 1.5" fill="none"/>
<path d="M1030.90,638.00 V448.20" stroke="#828282" stroke-width="1.45" stroke-dasharray="1.5 1.5" fill="none"/>
<path d="M1080.46,638.00 V448.20" stroke="#828282" stroke-width="1.45" stroke-dasharray="1.5 1.5" fill="none"/>
<path d="M1130.02,638.00 V448.20" stroke="#828282" stroke-width="1.45" stroke-dasharray="1.5 1.5" fill="none"/>
<path d="M634.40,447.60 V644.50 H1155.30 M634.40,644.50 h6.6 M634.40,640.76 h3.5 M634.40,637.02 h3.5 M634.40,633.28 h3.5 M634.40,629.54 h3.5 M634.40,625.80 h6.6 M634.40,622.07 h3.5 M634.40,618.33 h3.5 M634.40,614.59 h3.5 M634.40,610.85 h3.5 M634.40,607.11 h6.6 M634.40,603.37 h3.5 M634.40,599.63 h3.5 M634.40,595.89 h3.5 M634.40,592.15 h3.5 M634.40,588.41 h6.6 M634.40,584.68 h3.5 M634.40,580.94 h3.5 M634.40,577.20 h3.5 M634.40,573.46 h3.5 M634.40,569.72 h6.6 M634.40,565.98 h3.5 M634.40,562.24 h3.5 M634.40,558.50 h3.5 M634.40,554.76 h3.5 M634.40,551.02 h6.6 M634.40,547.28 h3.5 M634.40,543.55 h3.5 M634.40,539.81 h3.5 M634.40,536.07 h3.5 M634.40,532.33 h6.6 M634.40,528.59 h3.5 M634.40,524.85 h3.5 M634.40,521.11 h3.5 M634.40,517.37 h3.5 M634.40,513.63 h6.6 M634.40,509.89 h3.5 M634.40,506.16 h3.5 M634.40,502.42 h3.5 M634.40,498.68 h3.5 M634.40,494.94 h6.6 M634.40,491.20 h3.5 M634.40,487.46 h3.5 M634.40,483.72 h3.5 M634.40,479.98 h3.5 M634.40,476.24 h6.6 M634.40,472.50 h3.5 M634.40,468.76 h3.5 M634.40,465.03 h3.5 M634.40,461.29 h3.5 M634.40,457.55 h6.6 M634.40,453.81 h3.5 M634.40,450.07 h3.5 M634.40,644.50 v-6.6 M644.31,644.50 v-3.4 M654.22,644.50 v-3.4 M664.14,644.50 v-3.4 M674.05,644.50 v-3.4 M683.96,644.50 v-6.6 M693.87,644.50 v-3.4 M703.79,644.50 v-3.4 M713.70,644.50 v-3.4 M723.61,644.50 v-3.4 M733.52,644.50 v-6.6 M743.44,644.50 v-3.4 M753.35,644.50 v-3.4 M763.26,644.50 v-3.4 M773.17,644.50 v-3.4 M783.09,644.50 v-6.6 M793.00,644.50 v-3.4 M802.91,644.50 v-3.4 M812.82,644.50 v-3.4 M822.74,644.50 v-3.4 M832.65,644.50 v-6.6 M842.56,644.50 v-3.4 M852.47,644.50 v-3.4 M862.38,644.50 v-3.4 M872.30,644.50 v-3.4 M882.21,644.50 v-6.6 M892.12,644.50 v-3.4 M902.03,644.50 v-3.4 M911.95,644.50 v-3.4 M921.86,644.50 v-3.4 M931.77,644.50 v-6.6 M941.68,644.50 v-3.4 M951.60,644.50 v-3.4 M961.51,644.50 v-3.4 M971.42,644.50 v-3.4 M981.33,644.50 v-6.6 M991.25,644.50 v-3.4 M1001.16,644.50 v-3.4 M1011.07,644.50 v-3.4 M1020.98,644.50 v-3.4 M1030.90,644.50 v-6.6 M1040.81,644.50 v-3.4 M1050.72,644.50 v-3.4 M1060.63,644.50 v-3.4 M1070.54,644.50 v-3.4 M1080.46,644.50 v-6.6 M1090.37,644.50 v-3.4 M1100.28,644.50 v-3.4 M1110.19,644.50 v-3.4 M1120.11,644.50 v-3.4 M1130.02,644.50 v-6.6 M1139.93,644.50 v-3.4 M1149.84,644.50 v-3.4" fill="none" stroke="#000" stroke-width="1.15"/>
<text x="630.1" y="650.2" text-anchor="end" font-size="12.3" stroke="#000" stroke-width="0.3">0.0</text>
<text x="630.1" y="631.5" text-anchor="end" font-size="12.3" stroke="#000" stroke-width="0.3">0.1</text>
<text x="630.1" y="612.8" text-anchor="end" font-size="12.3" stroke="#000" stroke-width="0.3">0.2</text>
<text x="630.1" y="594.1" text-anchor="end" font-size="12.3" stroke="#000" stroke-width="0.3">0.3</text>
<text x="630.1" y="575.4" text-anchor="end" font-size="12.3" stroke="#000" stroke-width="0.3">0.4</text>
<text x="630.1" y="556.7" text-anchor="end" font-size="12.3" stroke="#000" stroke-width="0.3">0.5</text>
<text x="630.1" y="538.0" text-anchor="end" font-size="12.3" stroke="#000" stroke-width="0.3">0.6</text>
<text x="630.1" y="519.3" text-anchor="end" font-size="12.3" stroke="#000" stroke-width="0.3">0.7</text>
<text x="630.1" y="500.6" text-anchor="end" font-size="12.3" stroke="#000" stroke-width="0.3">0.8</text>
<text x="630.1" y="481.9" text-anchor="end" font-size="12.3" stroke="#000" stroke-width="0.3">0.9</text>
<text x="630.1" y="463.2" text-anchor="end" font-size="12.3" stroke="#000" stroke-width="0.3">1.0</text>
<text x="634.4" y="657.7" text-anchor="middle" font-size="12.3" stroke="#000" stroke-width="0.3">0</text>
<text x="684.0" y="657.7" text-anchor="middle" font-size="12.3" stroke="#000" stroke-width="0.3">1</text>
<text x="733.5" y="657.7" text-anchor="middle" font-size="12.3" stroke="#000" stroke-width="0.3">2</text>
<text x="783.1" y="657.7" text-anchor="middle" font-size="12.3" stroke="#000" stroke-width="0.3">3</text>
<text x="832.6" y="657.7" text-anchor="middle" font-size="12.3" stroke="#000" stroke-width="0.3">4</text>
<text x="882.2" y="657.7" text-anchor="middle" font-size="12.3" stroke="#000" stroke-width="0.3">5</text>
<text x="931.8" y="657.7" text-anchor="middle" font-size="12.3" stroke="#000" stroke-width="0.3">6</text>
<text x="981.3" y="657.7" text-anchor="middle" font-size="12.3" stroke="#000" stroke-width="0.3">7</text>
<text x="1030.9" y="657.7" text-anchor="middle" font-size="12.3" stroke="#000" stroke-width="0.3">8</text>
<text x="1080.5" y="657.7" text-anchor="middle" font-size="12.3" stroke="#000" stroke-width="0.3">9</text>
<text x="1130.0" y="657.7" text-anchor="middle" font-size="12.3" stroke="#000" stroke-width="0.3">10</text>
<polyline points="634.40,457.55 635.64,457.66 636.88,458.01 638.12,458.60 639.36,459.41 640.60,460.45 641.83,461.72 643.07,463.21 644.31,464.93 645.55,466.85 646.79,468.99 648.03,471.33 649.27,473.87 650.51,476.61 651.75,479.53 652.99,482.63 654.22,485.90 655.46,489.33 656.70,492.92 657.94,496.65 659.18,500.52 660.42,504.51 661.66,508.62 662.90,512.84 664.14,517.15 665.38,521.55 666.62,526.02 667.85,530.55 669.09,535.14 670.33,539.76 671.57,544.41 672.81,549.08 674.05,553.75 675.29,558.42 676.53,563.07 677.77,567.69 679.01,572.26 680.24,576.78 681.48,581.24 682.72,585.63 683.96,589.92 685.20,594.12 686.44,598.21 687.68,602.19 688.92,606.03 690.16,609.74 691.40,613.30 692.64,616.71 693.87,619.95 695.11,623.02 696.35,625.91 697.59,628.61 698.83,631.12 700.07,633.43 701.31,635.53 702.55,637.42 703.79,639.10 705.03,640.55 706.26,641.79 707.50,642.79 708.74,643.56 709.98,644.11 711.22,644.42 712.46,644.50 713.70,644.34 714.94,643.95 716.18,643.33 717.42,642.48 718.66,641.40 719.89,640.09 721.13,638.56 722.37,636.81 723.61,634.85 724.85,632.68 726.09,630.30 727.33,627.73 728.57,624.96 729.81,622.01 731.05,618.88 732.28,615.58 733.52,612.12 734.76,608.51 736.00,604.76 737.24,600.87 738.48,596.85 739.72,592.72 740.96,588.49 742.20,584.16 743.44,579.75 744.68,575.27 745.91,570.73 747.15,566.14 748.39,561.51 749.63,556.85 750.87,552.18 752.11,547.51 753.35,542.84 754.59,538.20 755.83,533.59 757.07,529.02 758.30,524.51 759.54,520.06 760.78,515.69 762.02,511.41 763.26,507.23 764.50,503.16 765.74,499.20 766.98,495.38 768.22,491.70 769.46,488.16 770.70,484.78 771.93,481.57 773.17,478.53 774.41,475.67 775.65,473.00 776.89,470.52 778.13,468.25 779.37,466.18 780.61,464.33 781.85,462.69 783.09,461.27 784.32,460.08 785.56,459.11 786.80,458.38 788.04,457.87 789.28,457.60 790.52,457.56 791.76,457.76 793.00,458.18 794.24,458.85 795.48,459.74 796.72,460.86 797.95,462.20 799.19,463.77 800.43,465.55 801.67,467.55 802.91,469.76 804.15,472.17 805.39,474.77 806.63,477.57 807.87,480.55 809.11,483.71 810.34,487.03 811.58,490.52 812.82,494.16 814.06,497.94 815.30,501.85 816.54,505.88 817.78,510.03 819.02,514.28 820.26,518.62 821.50,523.04 822.74,527.54 823.97,532.09 825.21,536.69 826.45,541.32 827.69,545.98 828.93,550.65 830.17,555.32 831.41,559.99 832.65,564.62 833.89,569.23 835.13,573.79 836.36,578.29 837.60,582.73 838.84,587.08 840.08,591.35 841.32,595.51 842.56,599.56 843.80,603.50 845.04,607.30 846.28,610.96 847.52,614.47 848.76,617.82 849.99,621.00 851.23,624.01 852.47,626.84 853.71,629.48 854.95,631.92 856.19,634.16 857.43,636.19 858.67,638.01 859.91,639.61 861.15,640.99 862.38,642.15 863.62,643.08 864.86,643.77 866.10,644.24 867.34,644.47 868.58,644.47 869.82,644.24 871.06,643.77 872.30,643.07 873.54,642.14 874.78,640.98 876.01,639.60 877.25,638.00 878.49,636.18 879.73,634.14 880.97,631.90 882.21,629.46 883.45,626.82 884.69,623.99 885.93,620.98 887.17,617.79 888.40,614.44 889.64,610.93 890.88,607.26 892.12,603.46 893.36,599.53 894.60,595.48 895.84,591.31 897.08,587.04 898.32,582.69 899.56,578.25 900.80,573.75 902.03,569.19 903.27,564.58 904.51,559.94 905.75,555.28 906.99,550.61 908.23,545.94 909.47,541.28 910.71,536.65 911.95,532.05 913.19,527.50 914.42,523.00 915.66,518.58 916.90,514.24 918.14,509.99 919.38,505.85 920.62,501.81 921.86,497.90 923.10,494.12 924.34,490.49 925.58,487.00 926.82,483.68 928.05,480.52 929.29,477.54 930.53,474.75 931.77,472.14 933.01,469.74 934.25,467.53 935.49,465.53 936.73,463.75 937.97,462.19 939.21,460.84 940.44,459.73 941.68,458.84 942.92,458.18 944.16,457.75 945.40,457.56 946.64,457.60 947.88,457.87 949.12,458.38 950.36,459.12 951.60,460.09 952.84,461.28 954.07,462.70 955.31,464.34 956.55,466.20 957.79,468.27 959.03,470.54 960.27,473.02 961.51,475.69 962.75,478.55 963.99,481.59 965.23,484.81 966.46,488.19 967.70,491.73 968.94,495.41 970.18,499.24 971.42,503.19 972.66,507.27 973.90,511.45 975.14,515.73 976.38,520.10 977.62,524.55 978.86,529.06 980.09,533.63 981.33,538.24 982.57,542.89 983.81,547.55 985.05,552.22 986.29,556.89 987.53,561.55 988.77,566.18 990.01,570.77 991.25,575.31 992.48,579.79 993.72,584.20 994.96,588.53 996.20,592.76 997.44,596.89 998.68,600.90 999.92,604.79 1001.16,608.54 1002.40,612.16 1003.64,615.61 1004.88,618.91 1006.11,622.04 1007.35,624.99 1008.59,627.75 1009.83,630.32 1011.07,632.70 1012.31,634.87 1013.55,636.83 1014.79,638.57 1016.03,640.10 1017.27,641.41 1018.50,642.49 1019.74,643.34 1020.98,643.96 1022.22,644.34 1023.46,644.50 1024.70,644.42 1025.94,644.10 1027.18,643.56 1028.42,642.78 1029.66,641.78 1030.90,640.54 1032.13,639.09 1033.37,637.41 1034.61,635.52 1035.85,633.41 1037.09,631.10 1038.33,628.59 1039.57,625.89 1040.81,623.00 1042.05,619.92 1043.29,616.68 1044.52,613.27 1045.76,609.71 1047.00,606.00 1048.24,602.15 1049.48,598.18 1050.72,594.09 1051.96,589.89 1053.20,585.59 1054.44,581.20 1055.68,576.75 1056.92,572.22 1058.15,567.64 1059.39,563.03 1060.63,558.38 1061.87,553.71 1063.11,549.04 1064.35,544.37 1065.59,539.72 1066.83,535.10 1068.07,530.51 1069.31,525.98 1070.54,521.51 1071.78,517.11 1073.02,512.80 1074.26,508.59 1075.50,504.48 1076.74,500.48 1077.98,496.62 1079.22,492.89 1080.46,489.30 1081.70,485.87 1082.94,482.60 1084.17,479.50 1085.41,476.58 1086.65,473.85 1087.89,471.31 1089.13,468.97 1090.37,466.84 1091.61,464.91 1092.85,463.20 1094.09,461.71 1095.33,460.44 1096.56,459.40 1097.80,458.59 1099.04,458.01 1100.28,457.66 1101.52,457.55 1102.76,457.67 1104.00,458.02 1105.24,458.60 1106.48,459.42 1107.72,460.46 1108.96,461.73 1110.19,463.23 1111.43,464.94 1112.67,466.87 1113.91,469.01 1115.15,471.35 1116.39,473.90 1117.63,476.63 1118.87,479.56 1120.11,482.66 1121.35,485.93 1122.58,489.36 1123.82,492.95 1125.06,496.68 1126.30,500.55 1127.54,504.55 1128.78,508.66 1130.02,512.88 1131.26,517.19 1132.50,521.59 1133.74,526.06 1134.98,530.59 1136.21,535.18 1137.45,539.80 1138.69,544.45 1139.93,549.12 1141.17,553.79 1142.41,558.46 1143.65,563.11 1144.89,567.73 1146.13,572.30 1147.37,576.82 1148.60,581.28 1149.84,585.67 1151.08,589.96 1152.32,594.16 1153.56,598.25 1154.80,602.22" fill="none" stroke="#c8232b" stroke-width="1.2" stroke-linejoin="round"/>
<g fill="#c8232b"><circle cx="634.70" cy="457.90" r="1.7"/><circle cx="639.66" cy="459.76" r="1.7"/><circle cx="644.61" cy="465.28" r="1.7"/><circle cx="649.57" cy="474.22" r="1.7"/><circle cx="654.52" cy="486.25" r="1.7"/><circle cx="659.48" cy="500.87" r="1.7"/><circle cx="664.44" cy="517.50" r="1.7"/><circle cx="669.39" cy="535.49" r="1.7"/><circle cx="674.35" cy="554.10" r="1.7"/><circle cx="679.31" cy="572.61" r="1.7"/><circle cx="684.26" cy="590.27" r="1.7"/><circle cx="689.22" cy="606.38" r="1.7"/><circle cx="694.17" cy="620.30" r="1.7"/><circle cx="699.13" cy="631.47" r="1.7"/><circle cx="704.09" cy="639.45" r="1.7"/><circle cx="709.04" cy="643.91" r="1.7"/><circle cx="714.00" cy="644.69" r="1.7"/><circle cx="718.96" cy="641.75" r="1.7"/><circle cx="723.91" cy="635.20" r="1.7"/><circle cx="728.87" cy="625.31" r="1.7"/><circle cx="733.82" cy="612.47" r="1.7"/><circle cx="738.78" cy="597.20" r="1.7"/><circle cx="743.74" cy="580.10" r="1.7"/><circle cx="748.69" cy="561.86" r="1.7"/><circle cx="753.65" cy="543.19" r="1.7"/><circle cx="758.60" cy="524.86" r="1.7"/><circle cx="763.56" cy="507.58" r="1.7"/><circle cx="768.52" cy="492.05" r="1.7"/><circle cx="773.47" cy="478.88" r="1.7"/><circle cx="778.43" cy="468.60" r="1.7"/><circle cx="783.39" cy="461.62" r="1.7"/><circle cx="788.34" cy="458.22" r="1.7"/><circle cx="793.30" cy="458.53" r="1.7"/><circle cx="798.25" cy="462.55" r="1.7"/><circle cx="803.21" cy="470.11" r="1.7"/><circle cx="808.17" cy="480.90" r="1.7"/><circle cx="813.12" cy="494.51" r="1.7"/><circle cx="818.08" cy="510.38" r="1.7"/><circle cx="823.04" cy="527.89" r="1.7"/><circle cx="827.99" cy="546.33" r="1.7"/><circle cx="832.95" cy="564.97" r="1.7"/><circle cx="837.90" cy="583.08" r="1.7"/><circle cx="842.86" cy="599.91" r="1.7"/><circle cx="847.82" cy="614.82" r="1.7"/><circle cx="852.77" cy="627.19" r="1.7"/><circle cx="857.73" cy="636.54" r="1.7"/><circle cx="862.68" cy="642.50" r="1.7"/><circle cx="867.64" cy="644.82" r="1.7"/><circle cx="872.60" cy="643.42" r="1.7"/><circle cx="877.55" cy="638.35" r="1.7"/><circle cx="882.51" cy="629.81" r="1.7"/><circle cx="887.47" cy="618.14" r="1.7"/><circle cx="892.42" cy="603.81" r="1.7"/><circle cx="897.38" cy="587.39" r="1.7"/><circle cx="902.33" cy="569.54" r="1.7"/><circle cx="907.29" cy="550.96" r="1.7"/><circle cx="912.25" cy="532.40" r="1.7"/><circle cx="917.20" cy="514.59" r="1.7"/><circle cx="922.16" cy="498.25" r="1.7"/><circle cx="927.12" cy="484.03" r="1.7"/><circle cx="932.07" cy="472.49" r="1.7"/><circle cx="937.03" cy="464.10" r="1.7"/><circle cx="941.98" cy="459.19" r="1.7"/><circle cx="946.94" cy="457.95" r="1.7"/><circle cx="951.90" cy="460.44" r="1.7"/><circle cx="956.85" cy="466.55" r="1.7"/><circle cx="961.81" cy="476.04" r="1.7"/><circle cx="966.76" cy="488.54" r="1.7"/><circle cx="971.72" cy="503.54" r="1.7"/><circle cx="976.68" cy="520.45" r="1.7"/><circle cx="981.63" cy="538.59" r="1.7"/><circle cx="986.59" cy="557.24" r="1.7"/><circle cx="991.55" cy="575.66" r="1.7"/><circle cx="996.50" cy="593.11" r="1.7"/><circle cx="1001.46" cy="608.89" r="1.7"/><circle cx="1006.41" cy="622.39" r="1.7"/><circle cx="1011.37" cy="633.05" r="1.7"/><circle cx="1016.33" cy="640.45" r="1.7"/><circle cx="1021.28" cy="644.31" r="1.7"/><circle cx="1026.24" cy="644.45" r="1.7"/><circle cx="1031.20" cy="640.89" r="1.7"/><circle cx="1036.15" cy="633.76" r="1.7"/><circle cx="1041.11" cy="623.35" r="1.7"/><circle cx="1046.06" cy="610.06" r="1.7"/><circle cx="1051.02" cy="594.44" r="1.7"/><circle cx="1055.98" cy="577.10" r="1.7"/><circle cx="1060.93" cy="558.73" r="1.7"/><circle cx="1065.89" cy="540.07" r="1.7"/><circle cx="1070.84" cy="521.86" r="1.7"/><circle cx="1075.80" cy="504.83" r="1.7"/><circle cx="1080.76" cy="489.65" r="1.7"/><circle cx="1085.71" cy="476.93" r="1.7"/><circle cx="1090.67" cy="467.19" r="1.7"/><circle cx="1095.63" cy="460.79" r="1.7"/><circle cx="1100.58" cy="458.01" r="1.7"/><circle cx="1105.54" cy="458.95" r="1.7"/><circle cx="1110.49" cy="463.58" r="1.7"/><circle cx="1115.45" cy="471.70" r="1.7"/><circle cx="1120.41" cy="483.01" r="1.7"/><circle cx="1125.36" cy="497.03" r="1.7"/><circle cx="1130.32" cy="513.23" r="1.7"/></g>
<text x="645.0" y="461.0" font-size="12.2" font-weight="bold" fill="#c8232b">f2(x)</text>
<text x="1147.5" y="636.0" font-size="13" fill="#1f2a8c" stroke="#1f2a8c" stroke-width="0.3">x</text>
<defs><linearGradient id="ba1" x1="0" y1="0" x2="0" y2="1"><stop offset="0" stop-color="#4aa8f2"/><stop offset="1" stop-color="#2268d0"/></linearGradient></defs><path d="M603,450.5 l6,7.4 h-3 v5.8 h-6 v-5.8 h-3 z" fill="url(#ba1)"/>
<defs><linearGradient id="ba0" x1="0" y1="0" x2="0" y2="1"><stop offset="0" stop-color="#4aa8f2"/><stop offset="1" stop-color="#2268d0"/></linearGradient></defs><path d="M603,641.4 l6,-7.4 h-3 v-5.8 h-6 v5.8 h-3 z" fill="url(#ba0)"/>
</svg>
</div></body></html>
